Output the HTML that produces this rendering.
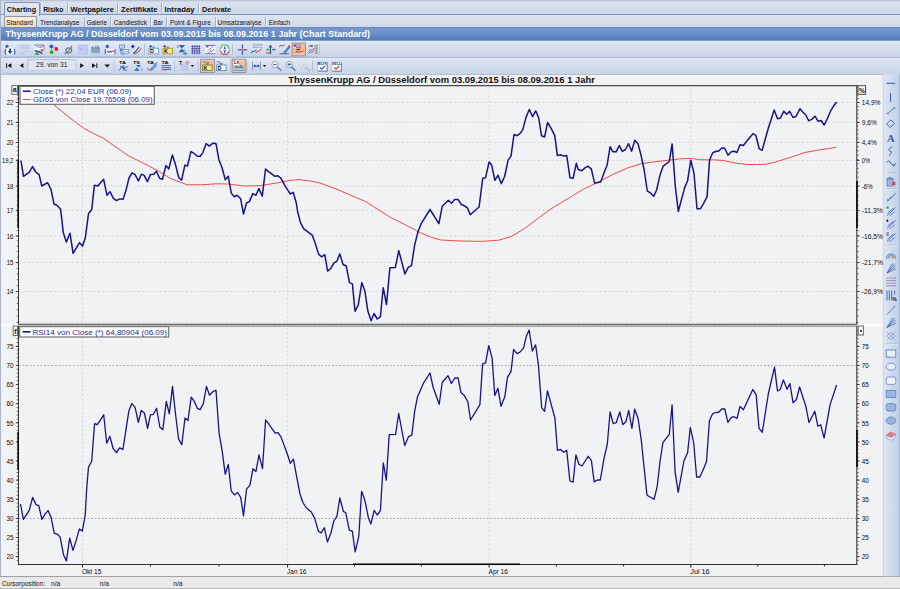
<!DOCTYPE html><html><head><meta charset="utf-8"><title>Chart</title><style>
*{margin:0;padding:0;box-sizing:border-box}
html,body{width:900px;height:589px;overflow:hidden}
body{position:relative;background:#d3dff0;font-family:"Liberation Sans",sans-serif;font-size:10px;color:#000}
.abs{position:absolute}
#row1{left:0;top:0;width:900px;height:15px;background:linear-gradient(#adb8c8 0,#ccd4e2 8%,#dbe2ef 20%,#d6deec 45%,#cad6e8 100%);border-bottom:1.2px solid #7f93b8}
#row2{left:0;top:15px;width:900px;height:13px;background:linear-gradient(#dee5f1 0,#d6deec 50%,#cdd8e9 93%,#a9b4c8 100%)}
.t1{position:absolute;top:4px;height:11px;font-weight:bold;font-size:9.5px;line-height:10px;color:#151515;white-space:nowrap;letter-spacing:-0.25px}
.t2{position:absolute;top:18px;height:10px;font-size:9px;line-height:10px;color:#151515;white-space:nowrap;letter-spacing:-0.3px}
.sep1{position:absolute;top:3px;width:1px;height:10px;background:#9fb1cd;border-right:1px solid #eef3fa;box-sizing:content-box}
.sep2{position:absolute;top:17px;width:1px;height:10px;background:#9fb1cd;border-right:1px solid #eef3fa;box-sizing:content-box}
#tabA{left:4px;top:2.3px;width:36px;height:13.7px;border:1px solid #7f93b8;border-bottom:none;border-radius:2px 2px 0 0;background:linear-gradient(#e1e8f3,#d8e0ee)}
#tabB{left:4px;top:16px;width:33.4px;height:12px;border:1px solid #8793a8;border-bottom:none;border-radius:2px 2px 0 0;background:linear-gradient(#fff3d9,#fdd3a6)}
#title{left:0;top:27.2px;width:900px;height:14.1px;background:linear-gradient(#6688c0 0%,#7397cd 12%,#6c91c9 40%,#5a83c0 75%,#527cbb 93%,#a3b9dc 100%);color:#fff;font-weight:bold;font-size:10.5px;line-height:13px;padding-left:3px;white-space:nowrap;letter-spacing:0.05px}
#tb1{left:0;top:41px;width:900px;height:16.6px;background:linear-gradient(#e6ecf6 0,#dbe3f0 12%,#d3dcec 60%,#c9d5e8 92%,#97a8c6 100%)}
#tb2{left:0;top:57.6px;width:900px;height:17.1px;background:linear-gradient(#e3e9f4 0,#dbe3f0 12%,#d2dcec 60%,#c8d4e7 92%,#a3b1c8 100%)}
#chart{left:1px;top:74.7px;width:883px;height:502.3px;background:#f1f2f4}
#leftedge{left:0;top:0;width:1.3px;height:589px;background:#aab5c7}
#rtb{left:884px;top:74px;width:16px;height:503px;background:linear-gradient(90deg,#dfe8f5,#c5d4ea)}
#status{left:0;top:576px;width:900px;height:13px;background:#ece9ea;border-top:1px solid #a0a0a0;border-bottom:1px solid #b9b9b9;font-size:8.5px;line-height:11px;color:#111;letter-spacing:-0.2px}
#status span{position:absolute;top:0}
svg text{font-family:"Liberation Sans",sans-serif}
</style></head><body>
<div id="row1" class="abs"></div><div id="row2" class="abs"></div>
<div id="tabA" class="abs"></div><div id="tabB" class="abs"></div>
<div class="sep1" style="left:40px"></div>
<div class="sep1" style="left:67px"></div>
<div class="sep1" style="left:117px"></div>
<div class="sep1" style="left:160.5px"></div>
<div class="sep1" style="left:198px"></div>
<div class="sep2" style="left:83.5px"></div>
<div class="sep2" style="left:110px"></div>
<div class="sep2" style="left:150px"></div>
<div class="sep2" style="left:166px"></div>
<div class="sep2" style="left:214.5px"></div>
<div class="sep2" style="left:265px"></div>
<div id="title" class="abs"></div>
<div id="tb1" class="abs"></div><div id="tb2" class="abs"></div>
<div id="chart" class="abs"></div><div id="rtb" class="abs"></div><div id="leftedge" class="abs"></div>
<div id="status" class="abs"></div>
<svg class="abs" style="left:0;top:0" width="900" height="589" viewBox="0 0 900 589">
<defs><linearGradient id="tbg" x1="0" y1="0" x2="0" y2="1"><stop offset="0" stop-color="#e4eaf5"/><stop offset="0.5" stop-color="#d5deed"/><stop offset="1" stop-color="#c6d2e6"/></linearGradient><linearGradient id="selg" x1="0" y1="0" x2="0" y2="1"><stop offset="0" stop-color="#f7c9a0"/><stop offset="0.5" stop-color="#f5b583"/><stop offset="1" stop-color="#f7c79b"/></linearGradient><linearGradient id="rtg" x1="0" y1="0" x2="1" y2="0"><stop offset="0" stop-color="#dfe7f3"/><stop offset="1" stop-color="#bfcfe7"/></linearGradient></defs>
<rect x="2" y="41.8" width="143" height="15.200000000000003" rx="2.5" fill="url(#tbg)" stroke="none"/><path d="M144.5,43.8 V55.0" stroke="#b3c3dc" stroke-width="1" fill="none"/><path d="M4,56.6 H143" stroke="#b1c1da" stroke-width="1" fill="none"/>
<rect x="146.5" y="41.8" width="86.5" height="15.200000000000003" rx="2.5" fill="url(#tbg)" stroke="none"/><path d="M232.5,43.8 V55.0" stroke="#b3c3dc" stroke-width="1" fill="none"/><path d="M148.5,56.6 H231" stroke="#b1c1da" stroke-width="1" fill="none"/>
<rect x="234.3" y="41.8" width="85.69999999999999" height="15.200000000000003" rx="2.5" fill="url(#tbg)" stroke="none"/><path d="M319.5,43.8 V55.0" stroke="#b3c3dc" stroke-width="1" fill="none"/><path d="M236.3,56.6 H318" stroke="#b1c1da" stroke-width="1" fill="none"/>
<rect x="2" y="58.4" width="112.7" height="15.899999999999999" rx="2.5" fill="url(#tbg)" stroke="none"/><path d="M114.2,60.4 V72.3" stroke="#b3c3dc" stroke-width="1" fill="none"/><path d="M4,73.89999999999999 H112.7" stroke="#b1c1da" stroke-width="1" fill="none"/>
<rect x="115.8" y="58.4" width="59.2" height="15.899999999999999" rx="2.5" fill="url(#tbg)" stroke="none"/><path d="M174.5,60.4 V72.3" stroke="#b3c3dc" stroke-width="1" fill="none"/><path d="M117.8,73.89999999999999 H173" stroke="#b1c1da" stroke-width="1" fill="none"/>
<rect x="175.8" y="58.4" width="71.5" height="15.899999999999999" rx="2.5" fill="url(#tbg)" stroke="none"/><path d="M246.8,60.4 V72.3" stroke="#b3c3dc" stroke-width="1" fill="none"/><path d="M177.8,73.89999999999999 H245.3" stroke="#b1c1da" stroke-width="1" fill="none"/>
<rect x="248.6" y="58.4" width="64.4" height="15.899999999999999" rx="2.5" fill="url(#tbg)" stroke="none"/><path d="M312.5,60.4 V72.3" stroke="#b3c3dc" stroke-width="1" fill="none"/><path d="M250.6,73.89999999999999 H311" stroke="#b1c1da" stroke-width="1" fill="none"/>
<path d="M7,44.3 l2,2.2 l-2,2.2 l-2,-2.2z" fill="#2f5fc4"/>
<rect x="6" y="47.6" width="7.6" height="7" rx="2" fill="#f6f8fd"/>
<path d="M5.6,49 q-1,2.8 0,5.6 M14.4,49 q1,2.8 0,5.6" stroke="#2f5fc4" stroke-width="1.1" fill="none"/>
<path d="M9.2,48.5 h1.8 v2.6 h1.5 l-2.4,2.8 l-2.4,-2.8 h1.5z" fill="#1c3f9c"/>
<rect x="19.6" y="44.6" width="10" height="4.4" fill="#bccdf0"/><path d="M21,54 l7,-4" stroke="#a9bde8" stroke-width="1.1" stroke-dasharray="1.4,0.7"/>
<rect x="34" y="44.6" width="10" height="5.6" fill="#f2f5fc"/><path d="M34,45 h10" stroke="#5b78c8" stroke-width="0.9"/><path d="M44,45 v5" stroke="#5b78c8" stroke-width="0.7"/>
<path d="M35.5,47.2 l2,-1 l1.5,1.2 l1.6,-0.6" stroke="#2f5fc4" stroke-width="0.7" fill="none"/><path d="M40,48 l1.5,-1.8 l1.2,0.8 l1,-1.4" stroke="#e03030" stroke-width="0.8" fill="none"/>
<path d="M35,50.2 l2.4,1.6 l1.4,-0.4 l3.6,2.4" stroke="#1c3f9c" stroke-width="1.3" fill="none"/>
<path d="M34.6,54.8 l2.4,-3 l2.4,3z" fill="#2aa02a"/><path d="M40,49.5 h4 l-2,2.6z" fill="#e03030"/>
<path d="M51.5,46.5 V52 M51.5,47 H55.5 V49" stroke="#8a94a8" stroke-width="0.8" fill="none"/>
<path d="M51.3,44.3 l2.1,2.2 l-2.1,2.2 l-2.1,-2.2z" fill="#1a3fe0"/><circle cx="56.3" cy="49" r="1.9" fill="#e81c1c"/><circle cx="51.6" cy="52.2" r="1.9" fill="#22b022"/>
<ellipse cx="68.8" cy="50.3" rx="2.9" ry="2.5" fill="none" stroke="#66808c" stroke-width="1.2"/><path d="M64.5,53.6 q4,-1 7.6,-7.8" stroke="#66808c" stroke-width="1.1" fill="none"/><path d="M66.4,53.6 h1.6" stroke="#c060d0" stroke-width="0.9"/>
<rect x="78" y="44.7" width="9.9" height="9.8" fill="#b9c8f0"/><path d="M80,47 l1.5,1.2 l1.5,-1.6 l1.5,1.4 l1.5,-1.4 M80,51.5 l1.5,1.2 l1.5,-1.6 l1.5,1.4 l1.5,-1.4" stroke="#d6e0f8" stroke-width="0.7" fill="none"/><path d="M80,49.3 h2" stroke="#8fa3d8" stroke-width="0.7"/>
<linearGradient id="barg" x1="0" y1="0" x2="0" y2="1"><stop offset="0" stop-color="#6d94c8"/><stop offset="1" stop-color="#93a8be"/></linearGradient>
<path d="M91.2,53 V47 h1.2 v-0.8 h1.4 v1.4 h1.2 v-1.8 h1.4 v1.2 h1 v-1.4 h1.4 v1.6 h1.2 V53z" fill="url(#barg)"/><path d="M91,54.2 h10" stroke="#8fd0e6" stroke-width="0.9"/>
<path d="M107.3,44.3 l2,2.2 l-2,2.2 l-2,-2.2z" fill="#2f5fc4"/>
<rect x="105.6" y="48.8" width="9" height="5.4" fill="#f6f8fd"/>
<path d="M105.3,49 v5.2 M115,49 v5.2" stroke="#2f5fc4" stroke-width="1" fill="none"/>
<path d="M106.6,52.8 l1.2,-2 l1.2,2 l1.2,-2 l1.2,2" stroke="#1c3f9c" stroke-width="0.8" fill="none"/><path d="M111,52.6 l1.2,-2 l1,1.6 l1,-2" stroke="#e03030" stroke-width="0.8" fill="none"/>
<rect x="119.4" y="45" width="5.2" height="3" fill="#f4f7fd" stroke="#5f86c8" stroke-width="0.8"/><path d="M120.5,46.6 h3" stroke="#8a98b0" stroke-width="0.6"/>
<rect x="122.8" y="49.7" width="6" height="3.4" fill="#f4f7fd" stroke="#5f86c8" stroke-width="0.8"/><path d="M124,51.5 h3.6" stroke="#8a98b0" stroke-width="0.6"/>
<path d="M121,48 v6 h4" stroke="#5f86c8" stroke-width="0.8" fill="none"/><path d="M119.3,50 l1.6,-1.3 v2.6z" fill="#2f5fc4"/><path d="M120.5,50 h2.4" stroke="#2f5fc4" stroke-width="0.8"/>
<path d="M132.8,44.4 l2,2.1 l-2,2.1 l-2,-2.1z" fill="#1a3fe0"/>
<path d="M132.4,53.6 L139,46.6" stroke="#f4f6fb" stroke-width="2.4"/><path d="M133,53.4 q3.5,-2 6.2,-6.6" stroke="#1c3f9c" stroke-width="1.1" fill="none"/><path d="M133.5,53.8 q5,-0.4 7.2,-5.4" stroke="#e03030" stroke-width="1" fill="none"/>
<path d="M152.4,48.3 v-1.6 h2.4 v1.6" fill="#6aa0cc" stroke="#6aa0cc" stroke-width="0.5"/><rect x="149" y="48.3" width="9.5" height="5.6" fill="#f6f8fc" stroke="#6aa0cc" stroke-width="0.9"/><text x="151.9" y="53.3" font-size="5.4" font-weight="bold" text-anchor="middle" fill="#111">D</text><path d="M149,46.3 h3" stroke="#1c3f9c" stroke-width="0.9"/><path d="M150.6,45.099999999999994 v2.4" stroke="#1c3f9c" stroke-width="0.9"/>
<path d="M166.4,48.3 v-1.6 h2.4 v1.6" fill="#a89c3c" stroke="#a89c3c" stroke-width="0.5"/><rect x="163" y="48.3" width="9.5" height="5.6" fill="#efe58c" stroke="#a89c3c" stroke-width="0.9"/><text x="165.9" y="53.3" font-size="5.4" font-weight="bold" text-anchor="middle" fill="#111">K</text><path d="M163,46.3 h3" stroke="#1c3f9c" stroke-width="0.9"/><path d="M164.6,45.099999999999994 v2.4" stroke="#1c3f9c" stroke-width="0.9"/>
<path d="M178.5,45 h6.6 l-3.3,3.6 l3.3,3.6 h-6.6 l3.3,-3.6z" fill="#2a62c8"/><path d="M183,53 h2.2 v-1.2 l2,1.8 l-2,1.8 v-1.2 h-2.2z" fill="#3a78d8"/><path d="M177.9,45.3 v2.8" stroke="#e03030" stroke-width="0.9"/><path d="M184.5,49.2 v2.2" stroke="#58c058" stroke-width="1"/>
<rect x="191.3" y="45.3" width="9" height="8.7" fill="#f0f3fb"/>
<path d="M192.4,45.2 v9 M191.2,46.4 h9.2" stroke="#3a3aa0" stroke-width="0.8"/>
<path d="M194.7,45.2 v9 M191.2,48.6 h9.2" stroke="#3a3aa0" stroke-width="0.8"/>
<path d="M197.0,45.2 v9 M191.2,50.8 h9.2" stroke="#3a3aa0" stroke-width="0.8"/>
<path d="M199.3,45.2 v9 M191.2,53.0 h9.2" stroke="#3a3aa0" stroke-width="0.8"/>
<rect x="205.3" y="45" width="10" height="9" fill="#f4f6fc"/><path d="M205.3,45.5 h10" stroke="#6a6ad8" stroke-width="1.1"/><path d="M205.3,53.6 h10" stroke="#7a7ae0" stroke-width="1"/>
<path d="M206,46.8 h2.4" stroke="#223" stroke-width="0.9"/><path d="M207.5,51 l5.5,-4.2" stroke="#2f5fc4" stroke-width="1" stroke-dasharray="1,0.6"/><path d="M208.5,52.6 l2,-1.6 l1,0.6 l2.6,-2.4" stroke="#e03030" stroke-width="0.9" fill="none"/>
<path d="M220,49.6 l2.5,-4.6 h4.6 l2.5,4.6 l-2.5,4.6 h-4.6z" fill="#f6f7fb"/>
<path d="M220.4,48.6 l2.1,-3.6 h4.6 l2.1,3.6" stroke="#58b048" stroke-width="1.2" fill="none"/><path d="M220.4,50.8 l2.1,3.6 h4.6 l2.1,-3.6" stroke="#e04848" stroke-width="1.2" fill="none"/><path d="M220,48.4 v2.6 M229.6,48.4 v2.6" stroke="#a0a0b8" stroke-width="0.8"/>
<path d="M224.8,46.4 v2.6 M224.8,50.6 v2.6" stroke="#2f5fc4" stroke-width="1.3"/><path d="M223.4,50.9 h2.8 M223.6,48.8 h2.4" stroke="#2f5fc4" stroke-width="0.7"/>
<path d="M242.4,44.5 v10.2" stroke="#2a3fd0" stroke-width="1.1"/><path d="M237.7,49.8 h9.4" stroke="#2a3fd0" stroke-width="1.1"/><path d="M241,49.8 h2.8 M242.4,48.4 v2.8" stroke="#e08a30" stroke-width="1.1"/>
<rect x="253.2" y="44.2" width="8.6" height="3.2" fill="#eef2fa" stroke="#8a96ac" stroke-width="0.6"/><path d="M254.2,46.3 l2,-0.6 l2,0.4 l2.4,-1" stroke="#2f5fc4" stroke-width="0.6" fill="none"/>
<path d="M251,53.4 l2,-2.6 l1.2,1.2 l2,-2.2" stroke="#1c3f9c" stroke-width="0.9" fill="none"/><path d="M256,53 l1.6,-2.2 l1,1 l2.8,-3" stroke="#e03030" stroke-width="0.9" fill="none"/>
<path d="M270.5,54.2 v-7" stroke="#1f5a80" stroke-width="1.2"/><path d="M268.5,47.6 l2,-3 l2,3z" fill="#1f5a80"/>
<path d="M266.2,49.6 h3.4 M267.6,48.4 v2.4" stroke="#30c030" stroke-width="1"/><path d="M266.2,53 h3.4" stroke="#f03030" stroke-width="1.1"/><path d="M273,49.6 h2.8" stroke="#2f5fc4" stroke-width="1"/><path d="M272,49.6 l1.6,-1.3 v2.6z" fill="#2f5fc4"/>
<path d="M279.2,46.6 l2,-1.4 l1.4,1 l2,-1.6" stroke="#223" stroke-width="0.7" fill="none"/><path d="M283.6,52.2 l5,-5.8 l1.4,1.2 l-5,5.8z" fill="#4c84e0" stroke="#2b4fa0" stroke-width="0.4"/><path d="M288.4,45.6 l1.6,1.4" stroke="#e03030" stroke-width="1.5"/><path d="M282.6,53.8 l1,-1.6 l1.4,1.2z" fill="#e8c66a"/><path d="M279.5,53.8 h9.6" stroke="#1f5a70" stroke-width="0.9"/>
<rect x="292.1" y="43" width="13.299999999999955" height="12.899999999999999" fill="url(#selg)" stroke="#8a8f9c" stroke-width="0.9"/>
<rect x="293.6" y="44.4" width="7.6" height="3.8" fill="#f5f7ff"/><path d="M295.6,44.9 h5.6 M295.6,47.7 h5.6" stroke="#e03030" stroke-width="0.9"/><path d="M293.6,46.3 h7.6" stroke="#5a78d8" stroke-width="0.8"/><rect x="293.6" y="44.4" width="2.2" height="2" fill="#2f5fc4"/>
<path d="M296.4,49.6 h3.6 M298.2,48.8 v1.2" stroke="#223" stroke-width="0.9"/><path d="M295.4,52.6 l1.6,-1.4 l1.2,1.4 l1.4,-1.4" stroke="#1c3f9c" stroke-width="0.9" fill="none"/><path d="M299.4,52.6 l1.4,-1.4 l1,1 l1.4,-1.6" stroke="#e03030" stroke-width="0.9" fill="none"/>
<rect x="314.6" y="44.2" width="3.2" height="10" fill="#b2bac8"/><path d="M314.6,46 h3.2 M314.6,48.4 h3.2 M314.6,50.8 h3.2 M314.6,53 h3.2" stroke="#6a7890" stroke-width="0.5"/>
<path d="M308.6,46 h4.4" stroke="#1f5a80" stroke-width="0.9"/><path d="M311.2,44.8 l1.8,1.2 l-1.8,1.2z" fill="#1f5a80"/><path d="M308.4,51.2 l2,-1.8 l1.2,1 l2.6,-2.4" stroke="#e03030" stroke-width="0.9" fill="none"/><path d="M308.4,53.4 l2,-1.8 l1.2,1 l2.6,-2.4" stroke="#2f5fc4" stroke-width="0.9" fill="none"/>
<path d="M6.6,63.3 v4.6" stroke="#111" stroke-width="1"/><path d="M11.4,63.199999999999996 v4.8 l-3.8,-2.4z" fill="#111"/>
<path d="M23.4,63.199999999999996 v4.8 l-3.8,-2.4z" fill="#111"/>
<rect x="27.8" y="59.6" width="48" height="10.6" fill="#dde5f2" stroke="#c0cbdd" stroke-width="0.8"/><path d="M27.8,70.2 v-10.6 h48" stroke="#b4c0d4" stroke-width="0.8" fill="none"/>
<text x="36" y="66.8" font-size="7.6" fill="#222" textLength="31.5" lengthAdjust="spacingAndGlyphs">29. von 31</text>
<path d="M80.2,63.199999999999996 v4.8 l3.8,-2.4z" fill="#111"/>
<path d="M92,63.199999999999996 v4.8 l3.8,-2.4z" fill="#111"/><path d="M96.8,63.3 v4.6" stroke="#111" stroke-width="1"/>
<path d="M104.4,64.39999999999999 h5.6 l-2.8,3z" fill="#111"/>
<text x="119" y="64.3" font-size="4.4" font-weight="bold" fill="#111" textLength="7" lengthAdjust="spacingAndGlyphs">TA</text>
<text x="133" y="64.3" font-size="4.4" font-weight="bold" fill="#111" textLength="7" lengthAdjust="spacingAndGlyphs">TS</text>
<text x="147" y="64.3" font-size="4.4" font-weight="bold" fill="#111" textLength="7" lengthAdjust="spacingAndGlyphs">TA</text>
<text x="161.5" y="64.3" font-size="4.4" font-weight="bold" fill="#111" textLength="7" lengthAdjust="spacingAndGlyphs">TA</text>
<path d="M119.4,70.6 l2.6,-4.6 l2.4,2.4 l3.6,-2 M120,66 l3.6,2.6 l3.6,2.2 M123.8,65.2 v5.6" stroke="#3a62c8" stroke-width="0.9" fill="none"/><circle cx="123.8" cy="68" r="1.1" fill="#2f5fc4"/>
<path d="M136,65 h5 l-2.5,2.6z M134,70.8 l2.8,-3.4 l2.8,3.4z" fill="#2a6ad0"/><path d="M141.8,68 v3" stroke="#58c058" stroke-width="1.1"/>
<path d="M147.2,68 l2.4,2.6 l2,-2.2" stroke="#e03030" stroke-width="0.9" fill="none"/><path d="M150,70.4 q4,-2 7,-8.4 M151.4,70.6 q3.4,-1.6 5.6,-6 M150.4,69 q3,-2 5.4,-6" stroke="#3a62c8" stroke-width="0.8" fill="none"/>
<path d="M161.5,65.6 h9.6 M161.5,67.6 h9.6 M161.5,69.6 h9.6" stroke="#3a62c8" stroke-width="0.9"/><path d="M164,69.6 h2.2" stroke="#f04020" stroke-width="1.5"/><path d="M167.2,67.6 h2" stroke="#30a040" stroke-width="1.4"/>
<text x="179" y="64.6" font-size="5" font-weight="bold" fill="#111">T</text>
<path d="M182.2,62 v8.4" stroke="#8fb0e8" stroke-width="0.6" stroke-dasharray="0.8,0.6"/><path d="M180.4,64.4 h7.8" stroke="#8fb0e8" stroke-width="0.6" stroke-dasharray="0.8,0.6"/>
<path d="M184.1,62 v8.4" stroke="#8fb0e8" stroke-width="0.6" stroke-dasharray="0.8,0.6"/><path d="M180.4,66.3 h7.8" stroke="#8fb0e8" stroke-width="0.6" stroke-dasharray="0.8,0.6"/>
<path d="M186.0,62 v8.4" stroke="#8fb0e8" stroke-width="0.6" stroke-dasharray="0.8,0.6"/><path d="M180.4,68.2 h7.8" stroke="#8fb0e8" stroke-width="0.6" stroke-dasharray="0.8,0.6"/>
<path d="M187.9,62 v8.4" stroke="#8fb0e8" stroke-width="0.6" stroke-dasharray="0.8,0.6"/><path d="M180.4,70.1 h7.8" stroke="#8fb0e8" stroke-width="0.6" stroke-dasharray="0.8,0.6"/>
<circle cx="187.7" cy="62.6" r="1.4" fill="#fff" stroke="#e05060" stroke-width="0.7"/><circle cx="187.7" cy="62.6" r="0.5" fill="#2f5fc4"/>
<path d="M190.6,65.0 h3.6 l-1.8,2z" fill="#111"/>
<path d="M198,59.599999999999994 v12.5" stroke="#aebcd4" stroke-width="0.8"/>
<rect x="200.6" y="59.2" width="14.0" height="13.399999999999991" fill="url(#selg)" stroke="#8a8f9c" stroke-width="0.9"/>
<path d="M202.6,62.4 l1.4,-0.8 l1.4,1 l1.4,-1 l1.4,1 l1,-0.8" stroke="#2f5fc4" stroke-width="0.7" fill="none"/>
<path d="M206.0,65 v-1.6 h2.4 v1.6" fill="#8a8440" stroke="#8a8440" stroke-width="0.5"/><rect x="202.6" y="65" width="9.5" height="5.6" fill="#efe58c" stroke="#8a8440" stroke-width="0.9"/><text x="205.5" y="70" font-size="5.4" font-weight="bold" text-anchor="middle" fill="#111">K</text>
<path d="M216.6,61.6 h2.6 v1.8 h3.4" stroke="#4a78c0" stroke-width="0.8" fill="none"/>
<path d="M220.0,65 v-1.6 h2.4 v1.6" fill="#5a90c8" stroke="#5a90c8" stroke-width="0.5"/><rect x="216.6" y="65" width="9.5" height="5.6" fill="#f6f8fc" stroke="#5a90c8" stroke-width="0.9"/><text x="219.5" y="70" font-size="5.4" font-weight="bold" text-anchor="middle" fill="#111">D</text>
<path d="M230.5,59.599999999999994 v12.5" stroke="#aebcd4" stroke-width="0.8"/>
<rect x="232.1" y="59.2" width="13.700000000000017" height="13.399999999999991" fill="url(#selg)" stroke="#8a8f9c" stroke-width="0.9"/>
<rect x="233.6" y="60.4" width="5.6" height="4.6" fill="#fff"/><text x="233.9" y="64.3" font-size="4.6" font-weight="bold" fill="#111" textLength="5" lengthAdjust="spacingAndGlyphs">Ln</text>
<path d="M233.6,68.6 l3,-3.4 l2,2 l2.2,-2.4 l3.6,3.8z" fill="#2f90e0"/><path d="M233.6,70.2 h10.8" stroke="#2f90e0" stroke-width="1.1"/><path d="M233.6,69 h10.8" stroke="#f4f8ff" stroke-width="0.6"/>
<path d="M252.5,61.8 v8.4 M260.5,61.8 v8.4" stroke="#8a94a8" stroke-width="0.9"/><path d="M254.4,66 h4.2" stroke="#1a3fd0" stroke-width="1"/><path d="M253.2,66 l2,-1.7 v3.4z M259.8,66 l-2,-1.7 v3.4z" fill="#1a3fd0"/>
<path d="M262.8,65.0 h3.6 l-1.8,2z" fill="#111"/>
<circle cx="275" cy="64.5" r="3.2" fill="#f0f4fb" stroke="#7088b8" stroke-width="0.9" stroke-opacity="0.75"/><path d="M277.5,67.10000000000001 L280.8,70.3" stroke="#7088b8" stroke-width="1.5" stroke-linecap="round"/><path d="M273.4,64.5 h3.2" stroke="#2f5fc4" stroke-width="1.1"/>
<circle cx="289.2" cy="64.5" r="3.2" fill="#f0f4fb" stroke="#5d79b0" stroke-width="0.9" stroke-opacity="0.75"/><path d="M291.7,67.10000000000001 L295.0,70.3" stroke="#5d79b0" stroke-width="1.5" stroke-linecap="round"/><path d="M287.6,64.5 h3.2 M289.2,62.9 v3.2" stroke="#2f5fc4" stroke-width="1.1"/>
<circle cx="303.5" cy="64.8" r="3.2" fill="#f0f4fb" stroke="#b8c0cc" stroke-width="0.9" stroke-opacity="0.75"/><path d="M306.0,67.4 L309.3,70.6" stroke="#b8c0cc" stroke-width="1.5" stroke-linecap="round"/><rect x="302.2" y="63.4" width="2.6" height="3" fill="#c4cad4"/>
<rect x="317.7" y="62.2" width="9.3" height="8.8" fill="#fff" stroke="#a8b4c8" stroke-width="0.6"/><path d="M317.90000000000003,71.2 h9.3 v-8.6" stroke="#6a7690" stroke-width="0.9" fill="none"/>
<text x="317.5" y="64.6" font-size="4.2" font-weight="bold" fill="#2040b0" textLength="9.4" lengthAdjust="spacingAndGlyphs">BUY</text>
<path d="M319.90000000000003,67.4 l1.8,1.8 l3.2,-3.2" stroke="#2f5fc4" stroke-width="1.3" fill="none"/>
<rect x="332.0" y="62.2" width="9.3" height="8.8" fill="#fff" stroke="#a8b4c8" stroke-width="0.6"/><path d="M332.20000000000005,71.2 h9.3 v-8.6" stroke="#6a7690" stroke-width="0.9" fill="none"/>
<text x="331.8" y="64.6" font-size="4.2" font-weight="bold" fill="#2040b0" textLength="9.4" lengthAdjust="spacingAndGlyphs">SELL</text>
<path d="M334.20000000000005,67.4 l1.8,1.8 l3.2,-3.2" stroke="#e04020" stroke-width="1.3" fill="none"/>
<rect x="883" y="74.7" width="17" height="501.5" fill="url(#rtg)"/><rect x="899" y="74.7" width="1" height="501.5" fill="#a9b9d3"/>
<path d="M883.3,74.7 V576.2" stroke="#c9d5e9" stroke-width="1"/>
<path d="M886,188.5 H898" stroke="#a9bad6" stroke-width="0.9"/><path d="M886,189.4 H898" stroke="#e8eef8" stroke-width="0.8"/>
<path d="M886,245 H898" stroke="#a9bad6" stroke-width="0.9"/><path d="M886,245.9 H898" stroke="#e8eef8" stroke-width="0.8"/>
<path d="M886,343.8 H898" stroke="#a9bad6" stroke-width="0.9"/><path d="M886,344.7 H898" stroke="#e8eef8" stroke-width="0.8"/>
<path d="M886.4,83.3 H895.2" stroke="#3559c0" stroke-width="1"/>
<path d="M890.5,93 V101.8" stroke="#3559c0" stroke-width="1"/>
<path d="M887.6,113.6 L894.4,107.8 M886.9,112.6 l1.4,1.8 M893.8,107 l1.4,1.8" stroke="#3559c0" stroke-width="0.9"/>
<path d="M886.5,123.7 l4.5,-3.8 l3.6,3.8 l-4.5,3.8z" stroke="#3559c0" stroke-width="0.9" fill="none"/>
<text x="890.8" y="141.7" font-size="10.5" font-weight="bold" font-family="Liberation Serif,serif" style="font-family:'Liberation Serif',serif" text-anchor="middle" fill="#2a50c0">A</text>
<path d="M892.2,146.4 q-3.4,2.2 -3.4,3.4 q0,1 3,2.2 q-1.6,2 -2.4,3.6" stroke="#3559c0" stroke-width="0.9" fill="none"/>
<path d="M886.6,162.5 q2.2,-3.4 4.2,0.6 q2,4 4.4,0.4 M893.5,166.6 l1.8,-3" stroke="#3559c0" stroke-width="1" fill="none"/>
<path d="M887.5,172.3 H896" stroke="#b4bece" stroke-width="1"/>
<rect x="887.2" y="179" width="5.8" height="7" fill="#b4c8e8" stroke="#5a7ab8" stroke-width="0.9"/><path d="M889.2,180 v5 M891,180 v5" stroke="#6f8fc8" stroke-width="0.6"/><path d="M886.6,178.6 h7 M888.8,177.4 h2.6" stroke="#5a7ab8" stroke-width="0.9"/><path d="M892.3,182 l3,3 m0,-3 l-3,3" stroke="#e03030" stroke-width="1.1"/>
<path d="M886.8,201.5 L895.5,193.5 M887.5,199 l1.5,1.8 M890,196.8 l1.5,1.8" stroke="#3559c0" stroke-width="0.9"/>
<path d="M887,215.5 L895.5,207.5" stroke="#3559c0" stroke-width="0.9"/><path d="M887.5,213.0 l5.5,-4.5 M889.5,216.0 l5.5,-4.5" stroke="#3559c0" stroke-width="0.7"/><rect x="886.6" y="206.5" width="2" height="2.2" fill="#2aa02a"/>
<path d="M887,228.5 L895.5,220.5" stroke="#3559c0" stroke-width="0.9"/><path d="M887.5,226.0 l5.5,-4.5 M889.5,229.0 l5.5,-4.5" stroke="#3559c0" stroke-width="0.7"/><rect x="886.6" y="219.5" width="1.6" height="2.4" fill="#222"/>
<path d="M887,241.5 L895.5,233.5" stroke="#3559c0" stroke-width="0.9"/><path d="M887.5,239.0 l5.5,-4.5 M889.5,242.0 l5.5,-4.5" stroke="#3559c0" stroke-width="0.7"/><path d="M886.4,233 h2.4 M886.4,235 h2.4" stroke="#222" stroke-width="0.8"/>
<path d="M886.5,258.5 a4.6,4.6 0 0 1 9.2,0 M888.2,258.5 a2.9,2.9 0 0 1 5.8,0" stroke="#3559c0" stroke-width="0.8" fill="none"/><path d="M887,258 h8.4" stroke="#d8b040" stroke-width="0.9"/>
<path d="M887,273 L895,263.5 M887,273 L895.6,266 M887,273 L895.8,268.8 M887,273 L892.5,263.5" stroke="#3559c0" stroke-width="0.7"/>
<path d="M886.5,278.0 h9.4" stroke="#e03030" stroke-width="0.9" stroke-dasharray="1.2,0.8"/>
<path d="M886.5,280.6 h9.4" stroke="#3559c0" stroke-width="0.9" stroke-dasharray="1.2,0.8"/>
<path d="M886.5,283.2 h9.4" stroke="#e03030" stroke-width="0.9" stroke-dasharray="1.2,0.8"/>
<path d="M886.5,285.8 h9.4" stroke="#3559c0" stroke-width="0.9" stroke-dasharray="1.2,0.8"/>
<path d="M887,290.5 v10 M889.3,290.5 v10 M891.6,290.5 v10 M894.6,290.5 v4" stroke="#3559c0" stroke-width="0.9"/><text x="892.3" y="301" font-size="5" font-weight="bold" fill="#111">%</text>
<path d="M887,314.5 L895.4,306" stroke="#3559c0" stroke-width="0.8"/>
<path d="M887,327.5 L895,318 M887,327.5 L895.6,320.5 M887,327.5 L895.8,323.3 M887,327.5 L892.5,318" stroke="#3559c0" stroke-width="0.7"/>
<path d="M887,332 l8,8 m0,-8 l-8,8 M891,332 l4,4 l-4,4 l-4,-4z" stroke="#6080d0" stroke-width="0.5" fill="none"/>
<rect x="886.2" y="350" width="9.6" height="7.2" fill="#e9eef8" stroke="#5f80c4" stroke-width="0.9"/>
<ellipse cx="891" cy="366.7" rx="4.8" ry="3.5" fill="#e9eef8" stroke="#6f8cc8" stroke-width="0.9"/>
<rect x="886.2" y="377" width="9.6" height="7.4" rx="2" fill="#eef2fa" stroke="#6f8cc8" stroke-width="0.9"/>
<rect x="886.2" y="390.4" width="9.6" height="7.2" fill="#9db3e0" stroke="#6685c8" stroke-width="0.9"/>
<rect x="886.2" y="403.6" width="9.6" height="7.4" rx="2.2" fill="#9db3e0" stroke="#6685c8" stroke-width="0.9"/>
<ellipse cx="891" cy="420.6" rx="4.8" ry="3.6" fill="#9db3e0" stroke="#6685c8" stroke-width="0.9"/>
<path d="M886.3,435.5 l4,-3.5 l5.2,2 l-4,3.6z" fill="#e87a80" stroke="#c04850" stroke-width="0.5"/><path d="M886.3,435.5 v2.6 l5.2,2.2 l4,-3.6 v-2.7 l-4,3.6z" fill="#eef2fb" stroke="#6f8cc8" stroke-width="0.6"/>
<text x="6.8" y="11.5" font-size="8.1" font-weight="bold" fill="#111" text-anchor="start" textLength="29.2" lengthAdjust="spacingAndGlyphs">Charting</text>
<text x="43.2" y="11.5" font-size="8.1" font-weight="bold" fill="#111" text-anchor="start" textLength="20.3" lengthAdjust="spacingAndGlyphs">Risiko</text>
<text x="70.6" y="11.5" font-size="8.1" font-weight="bold" fill="#111" text-anchor="start" textLength="43.4" lengthAdjust="spacingAndGlyphs">Wertpapiere</text>
<text x="121.0" y="11.5" font-size="8.1" font-weight="bold" fill="#111" text-anchor="start" textLength="36.5" lengthAdjust="spacingAndGlyphs">Zertifikate</text>
<text x="164.5" y="11.5" font-size="8.1" font-weight="bold" fill="#111" text-anchor="start" textLength="30.0" lengthAdjust="spacingAndGlyphs">Intraday</text>
<text x="202.0" y="11.5" font-size="8.1" font-weight="bold" fill="#111" text-anchor="start" textLength="29.0" lengthAdjust="spacingAndGlyphs">Derivate</text>
<text x="6.3" y="25.4" font-size="7.8" font-weight="normal" fill="#111" text-anchor="start" textLength="26.7" lengthAdjust="spacingAndGlyphs">Standard</text>
<text x="40.0" y="25.4" font-size="7.8" font-weight="normal" fill="#111" text-anchor="start" textLength="39.5" lengthAdjust="spacingAndGlyphs">Trendanalyse</text>
<text x="86.7" y="25.4" font-size="7.8" font-weight="normal" fill="#111" text-anchor="start" textLength="20.3" lengthAdjust="spacingAndGlyphs">Galerie</text>
<text x="113.7" y="25.4" font-size="7.8" font-weight="normal" fill="#111" text-anchor="start" textLength="33.3" lengthAdjust="spacingAndGlyphs">Candlestick</text>
<text x="153.5" y="25.4" font-size="7.8" font-weight="normal" fill="#111" text-anchor="start" textLength="9.5" lengthAdjust="spacingAndGlyphs">Bar</text>
<text x="170.0" y="25.4" font-size="7.8" font-weight="normal" fill="#111" text-anchor="start" textLength="40.7" lengthAdjust="spacingAndGlyphs">Point &amp; Figure</text>
<text x="217.5" y="25.4" font-size="7.8" font-weight="normal" fill="#111" text-anchor="start" textLength="44.2" lengthAdjust="spacingAndGlyphs">Umsatzanalyse</text>
<text x="268.7" y="25.4" font-size="7.8" font-weight="normal" fill="#111" text-anchor="start" textLength="21.3" lengthAdjust="spacingAndGlyphs">Einfach</text>
<text x="5.5" y="37.0" font-size="9.3" font-weight="bold" fill="#fff" text-anchor="start" textLength="364.5" lengthAdjust="spacingAndGlyphs">ThyssenKrupp AG / Düsseldorf vom 03.09.2015 bis 08.09.2016 1 Jahr (Chart Standard)</text>
<text x="288.3" y="83.0" font-size="8.5" font-weight="bold" fill="#111" text-anchor="start" textLength="306.5" lengthAdjust="spacingAndGlyphs">ThyssenKrupp AG / Düsseldorf vom 03.09.2015 bis 08.09.2016 1 Jahr</text>
<line x1="82.5" y1="87" x2="82.5" y2="323" stroke="#d3d5d8" stroke-width="1" stroke-dasharray="1.8,2.6"/>
<line x1="82.5" y1="328" x2="82.5" y2="564" stroke="#d3d5d8" stroke-width="1" stroke-dasharray="1.8,2.6"/>
<line x1="287.6" y1="87" x2="287.6" y2="323" stroke="#d3d5d8" stroke-width="1" stroke-dasharray="1.8,2.6"/>
<line x1="287.6" y1="328" x2="287.6" y2="564" stroke="#d3d5d8" stroke-width="1" stroke-dasharray="1.8,2.6"/>
<line x1="489.1" y1="87" x2="489.1" y2="323" stroke="#d3d5d8" stroke-width="1" stroke-dasharray="1.8,2.6"/>
<line x1="489.1" y1="328" x2="489.1" y2="564" stroke="#d3d5d8" stroke-width="1" stroke-dasharray="1.8,2.6"/>
<line x1="690.8" y1="87" x2="690.8" y2="323" stroke="#d3d5d8" stroke-width="1" stroke-dasharray="1.8,2.6"/>
<line x1="690.8" y1="328" x2="690.8" y2="564" stroke="#d3d5d8" stroke-width="1" stroke-dasharray="1.8,2.6"/>
<line x1="19" y1="102.5" x2="856" y2="102.5" stroke="#d3d5d8" stroke-width="1" stroke-dasharray="1.8,2.6"/>
<line x1="19" y1="122.5" x2="856" y2="122.5" stroke="#d3d5d8" stroke-width="1" stroke-dasharray="1.8,2.6"/>
<line x1="19" y1="142.5" x2="856" y2="142.5" stroke="#d3d5d8" stroke-width="1" stroke-dasharray="1.8,2.6"/>
<line x1="19" y1="160.5" x2="856" y2="160.5" stroke="#d3d5d8" stroke-width="1" stroke-dasharray="1.8,2.6"/>
<line x1="19" y1="186" x2="856" y2="186" stroke="#d3d5d8" stroke-width="1" stroke-dasharray="1.8,2.6"/>
<line x1="19" y1="210.5" x2="856" y2="210.5" stroke="#d3d5d8" stroke-width="1" stroke-dasharray="1.8,2.6"/>
<line x1="19" y1="236" x2="856" y2="236" stroke="#d3d5d8" stroke-width="1" stroke-dasharray="1.8,2.6"/>
<line x1="19" y1="262.5" x2="856" y2="262.5" stroke="#d3d5d8" stroke-width="1" stroke-dasharray="1.8,2.6"/>
<line x1="19" y1="291.5" x2="856" y2="291.5" stroke="#d3d5d8" stroke-width="1" stroke-dasharray="1.8,2.6"/>
<line x1="19" y1="322.3" x2="856" y2="322.3" stroke="#d3d5d8" stroke-width="1" stroke-dasharray="1.8,2.6"/>
<line x1="19" y1="365.5" x2="856" y2="365.5" stroke="#8a8a8a" stroke-width="0.7" stroke-dasharray="1.7,1.9"/>
<line x1="19" y1="518.5" x2="856" y2="518.5" stroke="#8a8a8a" stroke-width="0.7" stroke-dasharray="1.7,1.9"/>
<path d="M53.3,104.3 L65.0,114.0 L76.7,123.2 L85.0,129.0 L93.3,133.5 L103.3,138.2 L115.0,146.5 L128.3,155.7 L138.3,160.7 L148.3,165.7 L158.3,171.0 L165.0,175.1 L170.2,178.4 L187.2,184.8 L200.7,184.8 L216.0,183.8 L227.9,184.0 L244.8,186.0 L260.1,185.7 L278.8,182.6 L289.0,180.6 L299.1,179.5 L304.2,180.4 L310.0,180.8 L320.0,183.0 L335.0,188.5 L350.1,195.0 L365.6,201.6 L389.9,217.1 L405.3,224.8 L420.7,232.9 L431.8,237.4 L440.6,240.0 L458.0,240.9 L480.9,241.4 L498.8,240.2 L511.5,236.3 L524.2,228.7 L536.9,219.3 L549.7,209.6 L562.4,202.0 L572.6,195.7 L584.3,188.7 L597.4,182.6 L612.4,174.7 L627.3,168.0 L640.4,163.9 L653.5,162.0 L668.4,160.2 L679.6,158.9 L690.8,158.3 L700.2,159.8 L713.2,159.8 L723.3,160.5 L735.0,163.0 L746.7,164.5 L756.7,164.5 L766.7,164.2 L776.7,161.7 L790.0,157.5 L805.0,152.5 L818.3,150.0 L828.3,148.7 L836.3,147.2" fill="none" stroke="#f24a4a" stroke-width="1" stroke-linejoin="round"/>
<path d="M20.9,160.5 L23.5,176.3 L29.4,172.1 L32.5,166.5 L35.7,172.0 L39.1,174.6 L41.8,186.0 L47.6,182.7 L51.0,189.4 L54.0,204.0 L56.9,205.2 L60.5,209.0 L61.9,220.0 L63.2,232.2 L66.3,242.1 L70.0,233.2 L73.1,253.3 L79.5,242.7 L82.6,246.1 L85.4,237.4 L88.5,213.6 L91.7,209.7 L94.4,185.3 L97.8,186.0 L103.6,179.2 L107.0,195.3 L110.0,191.6 L113.4,198.4 L116.5,200.6 L119.7,198.9 L123.1,199.2 L126.1,189.9 L129.0,178.0 L132.1,172.9 L135.1,174.6 L138.4,181.0 L141.4,174.3 L144.0,175.1 L147.4,181.7 L150.4,174.6 L153.8,174.3 L156.4,171.2 L159.6,178.3 L162.5,179.2 L165.9,165.6 L168.8,169.0 L172.4,154.9 L175.3,163.9 L178.7,177.5 L181.6,180.1 L184.9,165.1 L187.5,166.0 L190.9,151.6 L193.9,153.2 L197.3,156.3 L200.2,156.3 L202.9,152.6 L206.2,143.6 L209.2,146.1 L212.9,143.2 L216.0,143.6 L218.9,159.7 L221.9,167.3 L225.3,179.7 L228.2,176.2 L231.3,193.1 L234.2,196.7 L237.2,195.3 L240.6,198.7 L243.5,214.0 L246.5,203.0 L249.4,201.6 L252.8,193.6 L255.9,195.3 L258.9,188.5 L262.3,196.2 L265.5,169.0 L268.6,171.6 L272.0,174.1 L274.9,176.3 L277.9,175.8 L281.0,178.4 L284.4,184.6 L287.3,189.4 L290.3,194.0 L293.2,192.3 L296.3,203.0 L297.6,211.5 L300.5,222.6 L303.8,228.8 L308.2,232.1 L312.2,235.1 L315.5,244.0 L318.6,254.1 L321.5,256.8 L324.8,254.6 L327.6,271.1 L331.0,268.2 L334.0,262.9 L336.9,261.2 L339.8,253.9 L343.1,264.5 L346.2,266.0 L349.5,282.6 L352.4,283.9 L355.0,311.3 L358.3,304.9 L361.8,282.6 L364.9,291.0 L367.8,310.8 L371.1,320.7 L374.0,313.5 L377.3,319.0 L380.4,316.8 L383.2,287.7 L386.5,304.6 L389.9,267.8 L395.4,267.4 L398.7,250.6 L401.6,261.2 L404.9,274.0 L408.2,267.4 L411.5,265.6 L414.6,245.3 L417.9,232.1 L421.2,223.7 L430.0,209.5 L438.9,223.6 L442.2,206.3 L448.3,200.2 L451.6,203.2 L454.7,199.4 L458.0,199.4 L461.3,204.5 L464.4,205.8 L467.4,207.8 L470.2,214.7 L479.1,207.0 L482.7,178.3 L485.5,177.8 L489.1,162.0 L491.6,165.0 L494.9,180.3 L498.0,175.2 L501.3,183.6 L504.6,176.5 L508.2,159.9 L511.0,156.1 L514.0,134.5 L517.1,135.7 L520.4,133.2 L522.9,129.4 L526.0,117.4 L529.3,109.5 L532.6,116.6 L535.7,110.8 L538.7,117.9 L541.5,135.7 L544.6,137.0 L547.6,122.5 L551.0,128.1 L554.8,135.7 L557.3,155.4 L560.4,154.8 L563.7,156.1 L566.7,155.4 L570.0,177.8 L573.1,178.3 L576.3,163.3 L578.2,169.5 L581.9,170.8 L585.3,167.6 L588.1,166.3 L591.3,168.9 L594.6,183.1 L600.6,182.0 L604.0,172.9 L607.1,165.2 L610.1,146.7 L612.9,151.8 L616.1,151.8 L619.3,145.6 L622.3,151.4 L625.4,149.5 L628.6,143.7 L631.6,151.2 L634.8,140.2 L638.0,143.7 L640.9,154.6 L644.1,169.5 L647.3,191.0 L650.3,192.9 L653.8,196.2 L656.6,190.0 L660.0,175.1 L663.2,166.1 L666.2,163.9 L669.3,161.5 L672.1,143.9 L675.3,186.3 L678.3,211.5 L681.5,199.4 L684.7,187.6 L687.6,180.7 L690.8,160.2 L694.0,173.2 L697.0,208.7 L700.5,208.7 L703.9,202.8 L707.1,196.6 L709.5,160.2 L712.7,152.7 L715.7,151.5 L718.5,151.1 L722.0,148.0 L724.7,148.3 L728.0,155.3 L731.2,151.7 L734.2,151.3 L737.0,152.5 L740.0,144.7 L743.3,145.5 L746.7,141.3 L750.0,137.2 L753.0,133.7 L755.8,135.3 L759.2,148.7 L762.2,150.3 L765.0,140.0 L768.3,128.3 L771.2,119.2 L774.2,110.0 L777.5,118.7 L780.5,118.0 L783.8,111.2 L786.7,114.2 L789.7,111.3 L793.0,117.5 L796.2,116.2 L800.0,108.7 L802.8,112.0 L805.8,115.0 L808.8,120.8 L812.0,119.2 L815.0,116.2 L818.0,121.2 L821.2,120.5 L824.2,125.0 L827.5,118.3 L830.5,111.2 L833.7,105.8 L836.7,102.0" fill="none" stroke="#15158a" stroke-width="1.5" stroke-linejoin="round"/>
<path d="M20.5,504.0 L23.4,519.4 L29.3,510.2 L32.6,497.4 L36.0,504.6 L38.8,505.7 L41.9,519.4 L45.2,513.9 L48.1,510.6 L51.0,517.2 L54.3,533.3 L57.4,534.2 L60.2,537.1 L63.5,554.7 L66.4,560.9 L69.7,538.2 L73.0,550.3 L76.3,539.9 L79.4,528.9 L82.3,531.1 L85.2,515.0 L86.7,488.5 L88.5,467.1 L91.7,461.3 L94.6,423.6 L97.4,424.7 L103.7,414.8 L106.7,443.2 L109.9,436.3 L113.1,448.5 L116.4,452.6 L119.6,447.9 L123.0,449.4 L126.1,428.8 L128.9,410.7 L131.9,403.6 L135.1,407.4 L138.3,422.3 L141.3,410.5 L144.4,413.0 L147.6,428.3 L150.4,414.8 L153.4,414.3 L156.6,408.3 L159.8,427.0 L162.8,429.8 L166.3,401.4 L169.3,413.9 L172.5,386.4 L175.6,414.8 L178.6,439.1 L181.8,444.7 L185.0,418.0 L188.0,420.4 L191.2,397.1 L194.0,400.8 L197.3,408.3 L200.1,409.6 L203.3,403.6 L206.5,386.4 L209.5,395.2 L213.0,391.5 L216.0,390.2 L219.1,433.3 L222.2,451.1 L225.2,474.2 L228.3,464.5 L231.2,490.8 L234.5,494.9 L237.6,492.5 L240.7,497.3 L243.5,515.8 L246.6,488.9 L249.9,485.4 L253.0,468.7 L255.9,471.6 L259.0,454.9 L262.5,468.7 L265.6,420.0 L268.5,423.6 L275.1,433.1 L278.0,432.6 L281.1,437.1 L287.5,454.5 L290.3,463.3 L293.4,459.2 L296.5,475.9 L299.9,493.7 L302.9,502.5 L306.0,507.5 L311.3,512.0 L314.8,518.6 L318.4,531.2 L321.3,532.9 L324.3,527.7 L327.4,541.9 L330.8,533.6 L333.8,521.0 L336.9,516.3 L339.8,498.0 L343.4,511.5 L345.7,512.7 L349.3,530.1 L352.3,531.2 L355.2,551.8 L358.8,536.4 L361.6,491.3 L365.0,500.8 L368.3,517.4 L370.9,524.0 L374.2,510.3 L377.3,515.0 L380.4,510.7 L383.3,462.8 L386.3,480.1 L389.2,434.7 L395.6,434.4 L398.7,413.5 L404.7,445.5 L408.5,436.7 L411.8,435.1 L414.7,411.2 L417.5,396.7 L423.6,382.9 L430.0,373.0 L433.2,387.5 L439.2,404.3 L442.2,382.5 L448.0,375.7 L451.4,383.4 L454.9,378.0 L458.0,377.9 L461.0,392.5 L464.4,395.6 L467.9,402.0 L470.5,420.0 L479.9,404.6 L482.6,363.9 L485.6,362.9 L488.7,345.6 L492.1,357.8 L494.8,395.4 L497.9,388.2 L501.0,406.3 L504.8,396.8 L507.5,377.1 L511.0,371.6 L513.6,349.4 L517.0,353.6 L520.4,351.7 L523.6,347.9 L526.5,335.7 L529.2,330.0 L532.3,351.0 L535.6,344.9 L538.4,364.7 L541.7,407.9 L544.6,411.2 L547.5,390.8 L554.9,418.0 L557.4,450.3 L560.5,449.4 L563.7,452.2 L566.7,450.2 L569.9,481.0 L573.1,482.1 L575.9,454.8 L578.9,464.2 L582.0,466.0 L588.2,456.3 L591.4,460.6 L594.2,481.9 L597.4,480.0 L600.3,480.0 L603.9,459.1 L607.3,444.2 L610.1,412.0 L613.2,423.6 L616.2,422.7 L619.8,412.0 L622.8,424.6 L625.9,421.8 L628.7,410.5 L631.9,428.3 L634.7,409.2 L638.1,418.4 L641.3,440.4 L644.2,468.5 L647.0,495.2 L654.0,499.3 L657.1,487.1 L660.1,461.0 L662.9,442.7 L669.3,434.3 L672.1,404.9 L675.1,472.2 L678.2,492.4 L683.9,461.0 L687.6,452.8 L690.3,427.3 L693.7,442.8 L696.6,477.0 L699.9,477.0 L703.6,468.8 L706.5,461.5 L709.4,420.7 L712.7,413.6 L715.8,412.5 L718.6,412.3 L721.9,409.0 L724.8,409.0 L727.9,422.3 L731.4,417.4 L734.1,416.7 L737.0,418.5 L740.0,406.4 L743.4,409.7 L752.8,389.4 L756.2,394.9 L759.0,428.4 L762.3,432.2 L768.3,394.0 L774.5,367.2 L777.5,391.0 L780.2,389.5 L783.4,379.9 L787.1,389.3 L789.9,383.6 L793.1,402.9 L796.4,399.5 L799.6,387.0 L805.8,406.1 L809.0,422.5 L814.8,411.3 L817.9,426.3 L820.7,424.8 L824.1,438.2 L830.1,404.6 L836.6,385.0" fill="none" stroke="#15158a" stroke-width="1.3" stroke-linejoin="round"/>
<line x1="18" y1="85.7" x2="857.4" y2="85.7" stroke="#4a4a4a" stroke-width="1.3"/>
<line x1="18.5" y1="85.1" x2="18.5" y2="324" stroke="#333" stroke-width="1.05"/>
<line x1="856.8" y1="85.1" x2="856.8" y2="324" stroke="#333" stroke-width="1.05"/>
<line x1="18.2" y1="160" x2="18.2" y2="228" stroke="#000" stroke-width="1.6"/>
<line x1="857" y1="181" x2="857" y2="228" stroke="#000" stroke-width="1.6"/>
<rect x="2" y="324" width="16" height="2.4" fill="#fff"/>
<rect x="857.6" y="324" width="25.6" height="2.4" fill="#fff"/>
<line x1="18" y1="324.3" x2="857.5" y2="324.3" stroke="#444" stroke-width="1"/>
<line x1="18" y1="326.1" x2="857.5" y2="326.1" stroke="#8a8a8a" stroke-width="1.4"/>
<line x1="18.5" y1="326" x2="18.5" y2="565" stroke="#333" stroke-width="1.05"/>
<line x1="856.8" y1="326" x2="856.8" y2="565" stroke="#333" stroke-width="1.05"/>
<line x1="17.9" y1="564.4" x2="857.4" y2="564.4" stroke="#333" stroke-width="1.05"/>
<line x1="18.2" y1="432" x2="18.2" y2="470" stroke="#000" stroke-width="1.6"/>
<line x1="353" y1="564.2" x2="520" y2="564.2" stroke="#000" stroke-width="1.6"/>
<line x1="857" y1="430" x2="857" y2="467" stroke="#000" stroke-width="1.6"/>
<line x1="15.8" y1="102.5" x2="18" y2="102.5" stroke="#333" stroke-width="0.9"/>
<text x="6.7" y="105.2" font-size="7.5" font-weight="normal" fill="#0a0a0a" text-anchor="start" textLength="6.7" lengthAdjust="spacingAndGlyphs">22</text>
<line x1="15.8" y1="122.5" x2="18" y2="122.5" stroke="#333" stroke-width="0.9"/>
<text x="6.7" y="125.2" font-size="7.5" font-weight="normal" fill="#0a0a0a" text-anchor="start" textLength="6.7" lengthAdjust="spacingAndGlyphs">21</text>
<line x1="15.8" y1="142.5" x2="18" y2="142.5" stroke="#333" stroke-width="0.9"/>
<text x="6.7" y="145.2" font-size="7.5" font-weight="normal" fill="#0a0a0a" text-anchor="start" textLength="6.7" lengthAdjust="spacingAndGlyphs">20</text>
<line x1="15.8" y1="160.5" x2="18" y2="160.5" stroke="#333" stroke-width="0.9"/>
<text x="1.9" y="163.2" font-size="7.5" font-weight="normal" fill="#0a0a0a" text-anchor="start" textLength="11.5" lengthAdjust="spacingAndGlyphs">19,2</text>
<line x1="15.8" y1="186" x2="18" y2="186" stroke="#333" stroke-width="0.9"/>
<text x="6.7" y="188.7" font-size="7.5" font-weight="normal" fill="#0a0a0a" text-anchor="start" textLength="6.7" lengthAdjust="spacingAndGlyphs">18</text>
<line x1="15.8" y1="210.5" x2="18" y2="210.5" stroke="#333" stroke-width="0.9"/>
<text x="6.7" y="213.2" font-size="7.5" font-weight="normal" fill="#0a0a0a" text-anchor="start" textLength="6.7" lengthAdjust="spacingAndGlyphs">17</text>
<line x1="15.8" y1="236" x2="18" y2="236" stroke="#333" stroke-width="0.9"/>
<text x="6.7" y="238.7" font-size="7.5" font-weight="normal" fill="#0a0a0a" text-anchor="start" textLength="6.7" lengthAdjust="spacingAndGlyphs">16</text>
<line x1="15.8" y1="262.5" x2="18" y2="262.5" stroke="#333" stroke-width="0.9"/>
<text x="6.7" y="265.2" font-size="7.5" font-weight="normal" fill="#0a0a0a" text-anchor="start" textLength="6.7" lengthAdjust="spacingAndGlyphs">15</text>
<line x1="15.8" y1="291.5" x2="18" y2="291.5" stroke="#333" stroke-width="0.9"/>
<text x="6.7" y="294.2" font-size="7.5" font-weight="normal" fill="#0a0a0a" text-anchor="start" textLength="6.7" lengthAdjust="spacingAndGlyphs">14</text>
<line x1="16.8" y1="322.5" x2="18" y2="322.5" stroke="#333" stroke-width="0.8"/>
<line x1="857" y1="322.5" x2="858.5" y2="322.5" stroke="#333" stroke-width="0.8"/>
<line x1="16.8" y1="316.1" x2="18" y2="316.1" stroke="#333" stroke-width="0.8"/>
<line x1="857" y1="316.1" x2="858.5" y2="316.1" stroke="#333" stroke-width="0.8"/>
<line x1="16.8" y1="309.8" x2="18" y2="309.8" stroke="#333" stroke-width="0.8"/>
<line x1="857" y1="309.8" x2="858.5" y2="309.8" stroke="#333" stroke-width="0.8"/>
<line x1="16.8" y1="303.6" x2="18" y2="303.6" stroke="#333" stroke-width="0.8"/>
<line x1="857" y1="303.6" x2="858.5" y2="303.6" stroke="#333" stroke-width="0.8"/>
<line x1="16.8" y1="297.5" x2="18" y2="297.5" stroke="#333" stroke-width="0.8"/>
<line x1="857" y1="297.5" x2="858.5" y2="297.5" stroke="#333" stroke-width="0.8"/>
<line x1="16.8" y1="291.5" x2="18" y2="291.5" stroke="#333" stroke-width="0.8"/>
<line x1="857" y1="291.5" x2="858.5" y2="291.5" stroke="#333" stroke-width="0.8"/>
<line x1="16.8" y1="285.6" x2="18" y2="285.6" stroke="#333" stroke-width="0.8"/>
<line x1="857" y1="285.6" x2="858.5" y2="285.6" stroke="#333" stroke-width="0.8"/>
<line x1="16.8" y1="279.7" x2="18" y2="279.7" stroke="#333" stroke-width="0.8"/>
<line x1="857" y1="279.7" x2="858.5" y2="279.7" stroke="#333" stroke-width="0.8"/>
<line x1="16.8" y1="274.0" x2="18" y2="274.0" stroke="#333" stroke-width="0.8"/>
<line x1="857" y1="274.0" x2="858.5" y2="274.0" stroke="#333" stroke-width="0.8"/>
<line x1="16.8" y1="268.3" x2="18" y2="268.3" stroke="#333" stroke-width="0.8"/>
<line x1="857" y1="268.3" x2="858.5" y2="268.3" stroke="#333" stroke-width="0.8"/>
<line x1="16.8" y1="262.7" x2="18" y2="262.7" stroke="#333" stroke-width="0.8"/>
<line x1="857" y1="262.7" x2="858.5" y2="262.7" stroke="#333" stroke-width="0.8"/>
<line x1="16.8" y1="257.1" x2="18" y2="257.1" stroke="#333" stroke-width="0.8"/>
<line x1="857" y1="257.1" x2="858.5" y2="257.1" stroke="#333" stroke-width="0.8"/>
<line x1="16.8" y1="251.7" x2="18" y2="251.7" stroke="#333" stroke-width="0.8"/>
<line x1="857" y1="251.7" x2="858.5" y2="251.7" stroke="#333" stroke-width="0.8"/>
<line x1="16.8" y1="246.3" x2="18" y2="246.3" stroke="#333" stroke-width="0.8"/>
<line x1="857" y1="246.3" x2="858.5" y2="246.3" stroke="#333" stroke-width="0.8"/>
<line x1="16.8" y1="240.9" x2="18" y2="240.9" stroke="#333" stroke-width="0.8"/>
<line x1="857" y1="240.9" x2="858.5" y2="240.9" stroke="#333" stroke-width="0.8"/>
<line x1="16.8" y1="235.7" x2="18" y2="235.7" stroke="#333" stroke-width="0.8"/>
<line x1="857" y1="235.7" x2="858.5" y2="235.7" stroke="#333" stroke-width="0.8"/>
<line x1="16.8" y1="230.5" x2="18" y2="230.5" stroke="#333" stroke-width="0.8"/>
<line x1="857" y1="230.5" x2="858.5" y2="230.5" stroke="#333" stroke-width="0.8"/>
<line x1="16.8" y1="225.4" x2="18" y2="225.4" stroke="#333" stroke-width="0.8"/>
<line x1="857" y1="225.4" x2="858.5" y2="225.4" stroke="#333" stroke-width="0.8"/>
<line x1="16.8" y1="220.3" x2="18" y2="220.3" stroke="#333" stroke-width="0.8"/>
<line x1="857" y1="220.3" x2="858.5" y2="220.3" stroke="#333" stroke-width="0.8"/>
<line x1="16.8" y1="215.3" x2="18" y2="215.3" stroke="#333" stroke-width="0.8"/>
<line x1="857" y1="215.3" x2="858.5" y2="215.3" stroke="#333" stroke-width="0.8"/>
<line x1="16.8" y1="210.3" x2="18" y2="210.3" stroke="#333" stroke-width="0.8"/>
<line x1="857" y1="210.3" x2="858.5" y2="210.3" stroke="#333" stroke-width="0.8"/>
<line x1="16.8" y1="205.4" x2="18" y2="205.4" stroke="#333" stroke-width="0.8"/>
<line x1="857" y1="205.4" x2="858.5" y2="205.4" stroke="#333" stroke-width="0.8"/>
<line x1="16.8" y1="200.6" x2="18" y2="200.6" stroke="#333" stroke-width="0.8"/>
<line x1="857" y1="200.6" x2="858.5" y2="200.6" stroke="#333" stroke-width="0.8"/>
<line x1="16.8" y1="195.8" x2="18" y2="195.8" stroke="#333" stroke-width="0.8"/>
<line x1="857" y1="195.8" x2="858.5" y2="195.8" stroke="#333" stroke-width="0.8"/>
<line x1="16.8" y1="191.1" x2="18" y2="191.1" stroke="#333" stroke-width="0.8"/>
<line x1="857" y1="191.1" x2="858.5" y2="191.1" stroke="#333" stroke-width="0.8"/>
<line x1="16.8" y1="186.4" x2="18" y2="186.4" stroke="#333" stroke-width="0.8"/>
<line x1="857" y1="186.4" x2="858.5" y2="186.4" stroke="#333" stroke-width="0.8"/>
<line x1="16.8" y1="181.8" x2="18" y2="181.8" stroke="#333" stroke-width="0.8"/>
<line x1="857" y1="181.8" x2="858.5" y2="181.8" stroke="#333" stroke-width="0.8"/>
<line x1="16.8" y1="177.2" x2="18" y2="177.2" stroke="#333" stroke-width="0.8"/>
<line x1="857" y1="177.2" x2="858.5" y2="177.2" stroke="#333" stroke-width="0.8"/>
<line x1="16.8" y1="172.7" x2="18" y2="172.7" stroke="#333" stroke-width="0.8"/>
<line x1="857" y1="172.7" x2="858.5" y2="172.7" stroke="#333" stroke-width="0.8"/>
<line x1="16.8" y1="168.3" x2="18" y2="168.3" stroke="#333" stroke-width="0.8"/>
<line x1="857" y1="168.3" x2="858.5" y2="168.3" stroke="#333" stroke-width="0.8"/>
<line x1="16.8" y1="163.8" x2="18" y2="163.8" stroke="#333" stroke-width="0.8"/>
<line x1="857" y1="163.8" x2="858.5" y2="163.8" stroke="#333" stroke-width="0.8"/>
<line x1="16.8" y1="159.5" x2="18" y2="159.5" stroke="#333" stroke-width="0.8"/>
<line x1="857" y1="159.5" x2="858.5" y2="159.5" stroke="#333" stroke-width="0.8"/>
<line x1="16.8" y1="155.1" x2="18" y2="155.1" stroke="#333" stroke-width="0.8"/>
<line x1="857" y1="155.1" x2="858.5" y2="155.1" stroke="#333" stroke-width="0.8"/>
<line x1="16.8" y1="150.8" x2="18" y2="150.8" stroke="#333" stroke-width="0.8"/>
<line x1="857" y1="150.8" x2="858.5" y2="150.8" stroke="#333" stroke-width="0.8"/>
<line x1="16.8" y1="146.6" x2="18" y2="146.6" stroke="#333" stroke-width="0.8"/>
<line x1="857" y1="146.6" x2="858.5" y2="146.6" stroke="#333" stroke-width="0.8"/>
<line x1="16.8" y1="142.4" x2="18" y2="142.4" stroke="#333" stroke-width="0.8"/>
<line x1="857" y1="142.4" x2="858.5" y2="142.4" stroke="#333" stroke-width="0.8"/>
<line x1="16.8" y1="138.2" x2="18" y2="138.2" stroke="#333" stroke-width="0.8"/>
<line x1="857" y1="138.2" x2="858.5" y2="138.2" stroke="#333" stroke-width="0.8"/>
<line x1="16.8" y1="134.1" x2="18" y2="134.1" stroke="#333" stroke-width="0.8"/>
<line x1="857" y1="134.1" x2="858.5" y2="134.1" stroke="#333" stroke-width="0.8"/>
<line x1="16.8" y1="130.0" x2="18" y2="130.0" stroke="#333" stroke-width="0.8"/>
<line x1="857" y1="130.0" x2="858.5" y2="130.0" stroke="#333" stroke-width="0.8"/>
<line x1="16.8" y1="126.0" x2="18" y2="126.0" stroke="#333" stroke-width="0.8"/>
<line x1="857" y1="126.0" x2="858.5" y2="126.0" stroke="#333" stroke-width="0.8"/>
<line x1="16.8" y1="122.0" x2="18" y2="122.0" stroke="#333" stroke-width="0.8"/>
<line x1="857" y1="122.0" x2="858.5" y2="122.0" stroke="#333" stroke-width="0.8"/>
<line x1="16.8" y1="118.0" x2="18" y2="118.0" stroke="#333" stroke-width="0.8"/>
<line x1="857" y1="118.0" x2="858.5" y2="118.0" stroke="#333" stroke-width="0.8"/>
<line x1="16.8" y1="114.1" x2="18" y2="114.1" stroke="#333" stroke-width="0.8"/>
<line x1="857" y1="114.1" x2="858.5" y2="114.1" stroke="#333" stroke-width="0.8"/>
<line x1="16.8" y1="110.2" x2="18" y2="110.2" stroke="#333" stroke-width="0.8"/>
<line x1="857" y1="110.2" x2="858.5" y2="110.2" stroke="#333" stroke-width="0.8"/>
<line x1="16.8" y1="106.4" x2="18" y2="106.4" stroke="#333" stroke-width="0.8"/>
<line x1="857" y1="106.4" x2="858.5" y2="106.4" stroke="#333" stroke-width="0.8"/>
<line x1="16.8" y1="102.5" x2="18" y2="102.5" stroke="#333" stroke-width="0.8"/>
<line x1="857" y1="102.5" x2="858.5" y2="102.5" stroke="#333" stroke-width="0.8"/>
<line x1="16.8" y1="98.8" x2="18" y2="98.8" stroke="#333" stroke-width="0.8"/>
<line x1="857" y1="98.8" x2="858.5" y2="98.8" stroke="#333" stroke-width="0.8"/>
<line x1="16.8" y1="95.0" x2="18" y2="95.0" stroke="#333" stroke-width="0.8"/>
<line x1="857" y1="95.0" x2="858.5" y2="95.0" stroke="#333" stroke-width="0.8"/>
<line x1="16.8" y1="91.3" x2="18" y2="91.3" stroke="#333" stroke-width="0.8"/>
<line x1="857" y1="91.3" x2="858.5" y2="91.3" stroke="#333" stroke-width="0.8"/>
<line x1="16.8" y1="87.6" x2="18" y2="87.6" stroke="#333" stroke-width="0.8"/>
<line x1="857" y1="87.6" x2="858.5" y2="87.6" stroke="#333" stroke-width="0.8"/>
<line x1="857" y1="102.5" x2="859.6" y2="102.5" stroke="#333" stroke-width="0.9"/>
<text x="861.8" y="105.2" font-size="7.5" font-weight="normal" fill="#0a0a0a" text-anchor="start" textLength="18.6" lengthAdjust="spacingAndGlyphs">14,9%</text>
<line x1="857" y1="122.5" x2="859.6" y2="122.5" stroke="#333" stroke-width="0.9"/>
<text x="861.8" y="125.2" font-size="7.5" font-weight="normal" fill="#0a0a0a" text-anchor="start" textLength="15.0" lengthAdjust="spacingAndGlyphs">9,6%</text>
<line x1="857" y1="142.5" x2="859.6" y2="142.5" stroke="#333" stroke-width="0.9"/>
<text x="861.8" y="145.2" font-size="7.5" font-weight="normal" fill="#0a0a0a" text-anchor="start" textLength="15.0" lengthAdjust="spacingAndGlyphs">4,4%</text>
<line x1="857" y1="160.5" x2="859.6" y2="160.5" stroke="#333" stroke-width="0.9"/>
<text x="861.8" y="163.2" font-size="7.5" font-weight="normal" fill="#0a0a0a" text-anchor="start" textLength="8.4" lengthAdjust="spacingAndGlyphs">0%</text>
<line x1="857" y1="186" x2="859.6" y2="186" stroke="#333" stroke-width="0.9"/>
<text x="861.8" y="188.7" font-size="7.5" font-weight="normal" fill="#0a0a0a" text-anchor="start" textLength="11.0" lengthAdjust="spacingAndGlyphs">-6%</text>
<line x1="857" y1="210.5" x2="859.6" y2="210.5" stroke="#333" stroke-width="0.9"/>
<text x="861.8" y="213.2" font-size="7.5" font-weight="normal" fill="#0a0a0a" text-anchor="start" textLength="21.0" lengthAdjust="spacingAndGlyphs">-11,3%</text>
<line x1="857" y1="236" x2="859.6" y2="236" stroke="#333" stroke-width="0.9"/>
<text x="861.8" y="238.7" font-size="7.5" font-weight="normal" fill="#0a0a0a" text-anchor="start" textLength="21.0" lengthAdjust="spacingAndGlyphs">-16,5%</text>
<line x1="857" y1="262.5" x2="859.6" y2="262.5" stroke="#333" stroke-width="0.9"/>
<text x="861.8" y="265.2" font-size="7.5" font-weight="normal" fill="#0a0a0a" text-anchor="start" textLength="21.0" lengthAdjust="spacingAndGlyphs">-21,7%</text>
<line x1="857" y1="291.5" x2="859.6" y2="291.5" stroke="#333" stroke-width="0.9"/>
<text x="861.8" y="294.2" font-size="7.5" font-weight="normal" fill="#0a0a0a" text-anchor="start" textLength="21.0" lengthAdjust="spacingAndGlyphs">-26,9%</text>
<line x1="15.8" y1="346.3" x2="18" y2="346.3" stroke="#333" stroke-width="0.9"/>
<line x1="857" y1="346.3" x2="859.6" y2="346.3" stroke="#333" stroke-width="0.9"/>
<text x="6.4" y="349.0" font-size="7.5" font-weight="normal" fill="#0a0a0a" text-anchor="start" textLength="7.0" lengthAdjust="spacingAndGlyphs">75</text>
<text x="861.8" y="349.0" font-size="7.5" font-weight="normal" fill="#0a0a0a" text-anchor="start" textLength="7.0" lengthAdjust="spacingAndGlyphs">75</text>
<line x1="15.8" y1="365.4" x2="18" y2="365.4" stroke="#333" stroke-width="0.9"/>
<line x1="857" y1="365.4" x2="859.6" y2="365.4" stroke="#333" stroke-width="0.9"/>
<text x="6.4" y="368.1" font-size="7.5" font-weight="normal" fill="#0a0a0a" text-anchor="start" textLength="7.0" lengthAdjust="spacingAndGlyphs">70</text>
<text x="861.8" y="368.1" font-size="7.5" font-weight="normal" fill="#0a0a0a" text-anchor="start" textLength="7.0" lengthAdjust="spacingAndGlyphs">70</text>
<line x1="15.8" y1="384.5" x2="18" y2="384.5" stroke="#333" stroke-width="0.9"/>
<line x1="857" y1="384.5" x2="859.6" y2="384.5" stroke="#333" stroke-width="0.9"/>
<text x="6.4" y="387.2" font-size="7.5" font-weight="normal" fill="#0a0a0a" text-anchor="start" textLength="7.0" lengthAdjust="spacingAndGlyphs">65</text>
<text x="861.8" y="387.2" font-size="7.5" font-weight="normal" fill="#0a0a0a" text-anchor="start" textLength="7.0" lengthAdjust="spacingAndGlyphs">65</text>
<line x1="15.8" y1="403.7" x2="18" y2="403.7" stroke="#333" stroke-width="0.9"/>
<line x1="857" y1="403.7" x2="859.6" y2="403.7" stroke="#333" stroke-width="0.9"/>
<text x="6.4" y="406.4" font-size="7.5" font-weight="normal" fill="#0a0a0a" text-anchor="start" textLength="7.0" lengthAdjust="spacingAndGlyphs">60</text>
<text x="861.8" y="406.4" font-size="7.5" font-weight="normal" fill="#0a0a0a" text-anchor="start" textLength="7.0" lengthAdjust="spacingAndGlyphs">60</text>
<line x1="15.8" y1="422.8" x2="18" y2="422.8" stroke="#333" stroke-width="0.9"/>
<line x1="857" y1="422.8" x2="859.6" y2="422.8" stroke="#333" stroke-width="0.9"/>
<text x="6.4" y="425.5" font-size="7.5" font-weight="normal" fill="#0a0a0a" text-anchor="start" textLength="7.0" lengthAdjust="spacingAndGlyphs">55</text>
<text x="861.8" y="425.5" font-size="7.5" font-weight="normal" fill="#0a0a0a" text-anchor="start" textLength="7.0" lengthAdjust="spacingAndGlyphs">55</text>
<line x1="15.8" y1="441.9" x2="18" y2="441.9" stroke="#333" stroke-width="0.9"/>
<line x1="857" y1="441.9" x2="859.6" y2="441.9" stroke="#333" stroke-width="0.9"/>
<text x="6.4" y="444.6" font-size="7.5" font-weight="normal" fill="#0a0a0a" text-anchor="start" textLength="7.0" lengthAdjust="spacingAndGlyphs">50</text>
<text x="861.8" y="444.6" font-size="7.5" font-weight="normal" fill="#0a0a0a" text-anchor="start" textLength="7.0" lengthAdjust="spacingAndGlyphs">50</text>
<line x1="15.8" y1="461.0" x2="18" y2="461.0" stroke="#333" stroke-width="0.9"/>
<line x1="857" y1="461.0" x2="859.6" y2="461.0" stroke="#333" stroke-width="0.9"/>
<text x="6.4" y="463.7" font-size="7.5" font-weight="normal" fill="#0a0a0a" text-anchor="start" textLength="7.0" lengthAdjust="spacingAndGlyphs">45</text>
<text x="861.8" y="463.7" font-size="7.5" font-weight="normal" fill="#0a0a0a" text-anchor="start" textLength="7.0" lengthAdjust="spacingAndGlyphs">45</text>
<line x1="15.8" y1="480.1" x2="18" y2="480.1" stroke="#333" stroke-width="0.9"/>
<line x1="857" y1="480.1" x2="859.6" y2="480.1" stroke="#333" stroke-width="0.9"/>
<text x="6.4" y="482.8" font-size="7.5" font-weight="normal" fill="#0a0a0a" text-anchor="start" textLength="7.0" lengthAdjust="spacingAndGlyphs">40</text>
<text x="861.8" y="482.8" font-size="7.5" font-weight="normal" fill="#0a0a0a" text-anchor="start" textLength="7.0" lengthAdjust="spacingAndGlyphs">40</text>
<line x1="15.8" y1="499.3" x2="18" y2="499.3" stroke="#333" stroke-width="0.9"/>
<line x1="857" y1="499.3" x2="859.6" y2="499.3" stroke="#333" stroke-width="0.9"/>
<text x="6.4" y="502.0" font-size="7.5" font-weight="normal" fill="#0a0a0a" text-anchor="start" textLength="7.0" lengthAdjust="spacingAndGlyphs">35</text>
<text x="861.8" y="502.0" font-size="7.5" font-weight="normal" fill="#0a0a0a" text-anchor="start" textLength="7.0" lengthAdjust="spacingAndGlyphs">35</text>
<line x1="15.8" y1="518.4" x2="18" y2="518.4" stroke="#333" stroke-width="0.9"/>
<line x1="857" y1="518.4" x2="859.6" y2="518.4" stroke="#333" stroke-width="0.9"/>
<text x="6.4" y="521.1" font-size="7.5" font-weight="normal" fill="#0a0a0a" text-anchor="start" textLength="7.0" lengthAdjust="spacingAndGlyphs">30</text>
<text x="861.8" y="521.1" font-size="7.5" font-weight="normal" fill="#0a0a0a" text-anchor="start" textLength="7.0" lengthAdjust="spacingAndGlyphs">30</text>
<line x1="15.8" y1="537.5" x2="18" y2="537.5" stroke="#333" stroke-width="0.9"/>
<line x1="857" y1="537.5" x2="859.6" y2="537.5" stroke="#333" stroke-width="0.9"/>
<text x="6.4" y="540.2" font-size="7.5" font-weight="normal" fill="#0a0a0a" text-anchor="start" textLength="7.0" lengthAdjust="spacingAndGlyphs">25</text>
<text x="861.8" y="540.2" font-size="7.5" font-weight="normal" fill="#0a0a0a" text-anchor="start" textLength="7.0" lengthAdjust="spacingAndGlyphs">25</text>
<line x1="15.8" y1="556.6" x2="18" y2="556.6" stroke="#333" stroke-width="0.9"/>
<line x1="857" y1="556.6" x2="859.6" y2="556.6" stroke="#333" stroke-width="0.9"/>
<text x="6.4" y="559.3" font-size="7.5" font-weight="normal" fill="#0a0a0a" text-anchor="start" textLength="7.0" lengthAdjust="spacingAndGlyphs">20</text>
<text x="861.8" y="559.3" font-size="7.5" font-weight="normal" fill="#0a0a0a" text-anchor="start" textLength="7.0" lengthAdjust="spacingAndGlyphs">20</text>
<line x1="16.7" y1="331.0" x2="18" y2="331.0" stroke="#333" stroke-width="0.8"/>
<line x1="857" y1="331.0" x2="858.6" y2="331.0" stroke="#333" stroke-width="0.8"/>
<line x1="16.7" y1="334.8" x2="18" y2="334.8" stroke="#333" stroke-width="0.8"/>
<line x1="857" y1="334.8" x2="858.6" y2="334.8" stroke="#333" stroke-width="0.8"/>
<line x1="16.7" y1="338.6" x2="18" y2="338.6" stroke="#333" stroke-width="0.8"/>
<line x1="857" y1="338.6" x2="858.6" y2="338.6" stroke="#333" stroke-width="0.8"/>
<line x1="16.7" y1="342.5" x2="18" y2="342.5" stroke="#333" stroke-width="0.8"/>
<line x1="857" y1="342.5" x2="858.6" y2="342.5" stroke="#333" stroke-width="0.8"/>
<line x1="16.7" y1="346.3" x2="18" y2="346.3" stroke="#333" stroke-width="0.8"/>
<line x1="857" y1="346.3" x2="858.6" y2="346.3" stroke="#333" stroke-width="0.8"/>
<line x1="16.7" y1="350.1" x2="18" y2="350.1" stroke="#333" stroke-width="0.8"/>
<line x1="857" y1="350.1" x2="858.6" y2="350.1" stroke="#333" stroke-width="0.8"/>
<line x1="16.7" y1="353.9" x2="18" y2="353.9" stroke="#333" stroke-width="0.8"/>
<line x1="857" y1="353.9" x2="858.6" y2="353.9" stroke="#333" stroke-width="0.8"/>
<line x1="16.7" y1="357.8" x2="18" y2="357.8" stroke="#333" stroke-width="0.8"/>
<line x1="857" y1="357.8" x2="858.6" y2="357.8" stroke="#333" stroke-width="0.8"/>
<line x1="16.7" y1="361.6" x2="18" y2="361.6" stroke="#333" stroke-width="0.8"/>
<line x1="857" y1="361.6" x2="858.6" y2="361.6" stroke="#333" stroke-width="0.8"/>
<line x1="16.7" y1="365.4" x2="18" y2="365.4" stroke="#333" stroke-width="0.8"/>
<line x1="857" y1="365.4" x2="858.6" y2="365.4" stroke="#333" stroke-width="0.8"/>
<line x1="16.7" y1="369.2" x2="18" y2="369.2" stroke="#333" stroke-width="0.8"/>
<line x1="857" y1="369.2" x2="858.6" y2="369.2" stroke="#333" stroke-width="0.8"/>
<line x1="16.7" y1="373.1" x2="18" y2="373.1" stroke="#333" stroke-width="0.8"/>
<line x1="857" y1="373.1" x2="858.6" y2="373.1" stroke="#333" stroke-width="0.8"/>
<line x1="16.7" y1="376.9" x2="18" y2="376.9" stroke="#333" stroke-width="0.8"/>
<line x1="857" y1="376.9" x2="858.6" y2="376.9" stroke="#333" stroke-width="0.8"/>
<line x1="16.7" y1="380.7" x2="18" y2="380.7" stroke="#333" stroke-width="0.8"/>
<line x1="857" y1="380.7" x2="858.6" y2="380.7" stroke="#333" stroke-width="0.8"/>
<line x1="16.7" y1="384.5" x2="18" y2="384.5" stroke="#333" stroke-width="0.8"/>
<line x1="857" y1="384.5" x2="858.6" y2="384.5" stroke="#333" stroke-width="0.8"/>
<line x1="16.7" y1="388.4" x2="18" y2="388.4" stroke="#333" stroke-width="0.8"/>
<line x1="857" y1="388.4" x2="858.6" y2="388.4" stroke="#333" stroke-width="0.8"/>
<line x1="16.7" y1="392.2" x2="18" y2="392.2" stroke="#333" stroke-width="0.8"/>
<line x1="857" y1="392.2" x2="858.6" y2="392.2" stroke="#333" stroke-width="0.8"/>
<line x1="16.7" y1="396.0" x2="18" y2="396.0" stroke="#333" stroke-width="0.8"/>
<line x1="857" y1="396.0" x2="858.6" y2="396.0" stroke="#333" stroke-width="0.8"/>
<line x1="16.7" y1="399.8" x2="18" y2="399.8" stroke="#333" stroke-width="0.8"/>
<line x1="857" y1="399.8" x2="858.6" y2="399.8" stroke="#333" stroke-width="0.8"/>
<line x1="16.7" y1="403.7" x2="18" y2="403.7" stroke="#333" stroke-width="0.8"/>
<line x1="857" y1="403.7" x2="858.6" y2="403.7" stroke="#333" stroke-width="0.8"/>
<line x1="16.7" y1="407.5" x2="18" y2="407.5" stroke="#333" stroke-width="0.8"/>
<line x1="857" y1="407.5" x2="858.6" y2="407.5" stroke="#333" stroke-width="0.8"/>
<line x1="16.7" y1="411.3" x2="18" y2="411.3" stroke="#333" stroke-width="0.8"/>
<line x1="857" y1="411.3" x2="858.6" y2="411.3" stroke="#333" stroke-width="0.8"/>
<line x1="16.7" y1="415.1" x2="18" y2="415.1" stroke="#333" stroke-width="0.8"/>
<line x1="857" y1="415.1" x2="858.6" y2="415.1" stroke="#333" stroke-width="0.8"/>
<line x1="16.7" y1="419.0" x2="18" y2="419.0" stroke="#333" stroke-width="0.8"/>
<line x1="857" y1="419.0" x2="858.6" y2="419.0" stroke="#333" stroke-width="0.8"/>
<line x1="16.7" y1="422.8" x2="18" y2="422.8" stroke="#333" stroke-width="0.8"/>
<line x1="857" y1="422.8" x2="858.6" y2="422.8" stroke="#333" stroke-width="0.8"/>
<line x1="16.7" y1="426.6" x2="18" y2="426.6" stroke="#333" stroke-width="0.8"/>
<line x1="857" y1="426.6" x2="858.6" y2="426.6" stroke="#333" stroke-width="0.8"/>
<line x1="16.7" y1="430.4" x2="18" y2="430.4" stroke="#333" stroke-width="0.8"/>
<line x1="857" y1="430.4" x2="858.6" y2="430.4" stroke="#333" stroke-width="0.8"/>
<line x1="16.7" y1="434.2" x2="18" y2="434.2" stroke="#333" stroke-width="0.8"/>
<line x1="857" y1="434.2" x2="858.6" y2="434.2" stroke="#333" stroke-width="0.8"/>
<line x1="16.7" y1="438.1" x2="18" y2="438.1" stroke="#333" stroke-width="0.8"/>
<line x1="857" y1="438.1" x2="858.6" y2="438.1" stroke="#333" stroke-width="0.8"/>
<line x1="16.7" y1="441.9" x2="18" y2="441.9" stroke="#333" stroke-width="0.8"/>
<line x1="857" y1="441.9" x2="858.6" y2="441.9" stroke="#333" stroke-width="0.8"/>
<line x1="16.7" y1="445.7" x2="18" y2="445.7" stroke="#333" stroke-width="0.8"/>
<line x1="857" y1="445.7" x2="858.6" y2="445.7" stroke="#333" stroke-width="0.8"/>
<line x1="16.7" y1="449.5" x2="18" y2="449.5" stroke="#333" stroke-width="0.8"/>
<line x1="857" y1="449.5" x2="858.6" y2="449.5" stroke="#333" stroke-width="0.8"/>
<line x1="16.7" y1="453.4" x2="18" y2="453.4" stroke="#333" stroke-width="0.8"/>
<line x1="857" y1="453.4" x2="858.6" y2="453.4" stroke="#333" stroke-width="0.8"/>
<line x1="16.7" y1="457.2" x2="18" y2="457.2" stroke="#333" stroke-width="0.8"/>
<line x1="857" y1="457.2" x2="858.6" y2="457.2" stroke="#333" stroke-width="0.8"/>
<line x1="16.7" y1="461.0" x2="18" y2="461.0" stroke="#333" stroke-width="0.8"/>
<line x1="857" y1="461.0" x2="858.6" y2="461.0" stroke="#333" stroke-width="0.8"/>
<line x1="16.7" y1="464.8" x2="18" y2="464.8" stroke="#333" stroke-width="0.8"/>
<line x1="857" y1="464.8" x2="858.6" y2="464.8" stroke="#333" stroke-width="0.8"/>
<line x1="16.7" y1="468.7" x2="18" y2="468.7" stroke="#333" stroke-width="0.8"/>
<line x1="857" y1="468.7" x2="858.6" y2="468.7" stroke="#333" stroke-width="0.8"/>
<line x1="16.7" y1="472.5" x2="18" y2="472.5" stroke="#333" stroke-width="0.8"/>
<line x1="857" y1="472.5" x2="858.6" y2="472.5" stroke="#333" stroke-width="0.8"/>
<line x1="16.7" y1="476.3" x2="18" y2="476.3" stroke="#333" stroke-width="0.8"/>
<line x1="857" y1="476.3" x2="858.6" y2="476.3" stroke="#333" stroke-width="0.8"/>
<line x1="16.7" y1="480.1" x2="18" y2="480.1" stroke="#333" stroke-width="0.8"/>
<line x1="857" y1="480.1" x2="858.6" y2="480.1" stroke="#333" stroke-width="0.8"/>
<line x1="16.7" y1="484.0" x2="18" y2="484.0" stroke="#333" stroke-width="0.8"/>
<line x1="857" y1="484.0" x2="858.6" y2="484.0" stroke="#333" stroke-width="0.8"/>
<line x1="16.7" y1="487.8" x2="18" y2="487.8" stroke="#333" stroke-width="0.8"/>
<line x1="857" y1="487.8" x2="858.6" y2="487.8" stroke="#333" stroke-width="0.8"/>
<line x1="16.7" y1="491.6" x2="18" y2="491.6" stroke="#333" stroke-width="0.8"/>
<line x1="857" y1="491.6" x2="858.6" y2="491.6" stroke="#333" stroke-width="0.8"/>
<line x1="16.7" y1="495.4" x2="18" y2="495.4" stroke="#333" stroke-width="0.8"/>
<line x1="857" y1="495.4" x2="858.6" y2="495.4" stroke="#333" stroke-width="0.8"/>
<line x1="16.7" y1="499.3" x2="18" y2="499.3" stroke="#333" stroke-width="0.8"/>
<line x1="857" y1="499.3" x2="858.6" y2="499.3" stroke="#333" stroke-width="0.8"/>
<line x1="16.7" y1="503.1" x2="18" y2="503.1" stroke="#333" stroke-width="0.8"/>
<line x1="857" y1="503.1" x2="858.6" y2="503.1" stroke="#333" stroke-width="0.8"/>
<line x1="16.7" y1="506.9" x2="18" y2="506.9" stroke="#333" stroke-width="0.8"/>
<line x1="857" y1="506.9" x2="858.6" y2="506.9" stroke="#333" stroke-width="0.8"/>
<line x1="16.7" y1="510.7" x2="18" y2="510.7" stroke="#333" stroke-width="0.8"/>
<line x1="857" y1="510.7" x2="858.6" y2="510.7" stroke="#333" stroke-width="0.8"/>
<line x1="16.7" y1="514.6" x2="18" y2="514.6" stroke="#333" stroke-width="0.8"/>
<line x1="857" y1="514.6" x2="858.6" y2="514.6" stroke="#333" stroke-width="0.8"/>
<line x1="16.7" y1="518.4" x2="18" y2="518.4" stroke="#333" stroke-width="0.8"/>
<line x1="857" y1="518.4" x2="858.6" y2="518.4" stroke="#333" stroke-width="0.8"/>
<line x1="16.7" y1="522.2" x2="18" y2="522.2" stroke="#333" stroke-width="0.8"/>
<line x1="857" y1="522.2" x2="858.6" y2="522.2" stroke="#333" stroke-width="0.8"/>
<line x1="16.7" y1="526.0" x2="18" y2="526.0" stroke="#333" stroke-width="0.8"/>
<line x1="857" y1="526.0" x2="858.6" y2="526.0" stroke="#333" stroke-width="0.8"/>
<line x1="16.7" y1="529.8" x2="18" y2="529.8" stroke="#333" stroke-width="0.8"/>
<line x1="857" y1="529.8" x2="858.6" y2="529.8" stroke="#333" stroke-width="0.8"/>
<line x1="16.7" y1="533.7" x2="18" y2="533.7" stroke="#333" stroke-width="0.8"/>
<line x1="857" y1="533.7" x2="858.6" y2="533.7" stroke="#333" stroke-width="0.8"/>
<line x1="16.7" y1="537.5" x2="18" y2="537.5" stroke="#333" stroke-width="0.8"/>
<line x1="857" y1="537.5" x2="858.6" y2="537.5" stroke="#333" stroke-width="0.8"/>
<line x1="16.7" y1="541.3" x2="18" y2="541.3" stroke="#333" stroke-width="0.8"/>
<line x1="857" y1="541.3" x2="858.6" y2="541.3" stroke="#333" stroke-width="0.8"/>
<line x1="16.7" y1="545.1" x2="18" y2="545.1" stroke="#333" stroke-width="0.8"/>
<line x1="857" y1="545.1" x2="858.6" y2="545.1" stroke="#333" stroke-width="0.8"/>
<line x1="16.7" y1="549.0" x2="18" y2="549.0" stroke="#333" stroke-width="0.8"/>
<line x1="857" y1="549.0" x2="858.6" y2="549.0" stroke="#333" stroke-width="0.8"/>
<line x1="16.7" y1="552.8" x2="18" y2="552.8" stroke="#333" stroke-width="0.8"/>
<line x1="857" y1="552.8" x2="858.6" y2="552.8" stroke="#333" stroke-width="0.8"/>
<line x1="16.7" y1="556.6" x2="18" y2="556.6" stroke="#333" stroke-width="0.8"/>
<line x1="857" y1="556.6" x2="858.6" y2="556.6" stroke="#333" stroke-width="0.8"/>
<line x1="16.7" y1="560.4" x2="18" y2="560.4" stroke="#333" stroke-width="0.8"/>
<line x1="857" y1="560.4" x2="858.6" y2="560.4" stroke="#333" stroke-width="0.8"/>
<line x1="82.5" y1="564" x2="82.5" y2="567.5" stroke="#222" stroke-width="1"/>
<text x="82.0" y="574.4" font-size="7.5" font-weight="normal" fill="#0a0a0a" text-anchor="start" textLength="19.3" lengthAdjust="spacingAndGlyphs">Okt 15</text>
<line x1="287.6" y1="564" x2="287.6" y2="567.5" stroke="#222" stroke-width="1"/>
<text x="287.1" y="574.4" font-size="7.5" font-weight="normal" fill="#0a0a0a" text-anchor="start" textLength="19.3" lengthAdjust="spacingAndGlyphs">Jan 16</text>
<line x1="489.1" y1="564" x2="489.1" y2="567.5" stroke="#222" stroke-width="1"/>
<text x="488.6" y="574.4" font-size="7.5" font-weight="normal" fill="#0a0a0a" text-anchor="start" textLength="19.3" lengthAdjust="spacingAndGlyphs">Apr 16</text>
<line x1="690.8" y1="564" x2="690.8" y2="567.5" stroke="#222" stroke-width="1"/>
<text x="690.3" y="574.4" font-size="7.5" font-weight="normal" fill="#0a0a0a" text-anchor="start" textLength="19.3" lengthAdjust="spacingAndGlyphs">Jul 16</text>
<line x1="150.5" y1="564" x2="150.5" y2="566.5" stroke="#222" stroke-width="1"/>
<line x1="219" y1="564" x2="219" y2="566.5" stroke="#222" stroke-width="1"/>
<line x1="354.5" y1="564" x2="354.5" y2="566.5" stroke="#222" stroke-width="1"/>
<line x1="421.4" y1="564" x2="421.4" y2="566.5" stroke="#222" stroke-width="1"/>
<line x1="556.4" y1="564" x2="556.4" y2="566.5" stroke="#222" stroke-width="1"/>
<line x1="623.6" y1="564" x2="623.6" y2="566.5" stroke="#222" stroke-width="1"/>
<line x1="757.8" y1="564" x2="757.8" y2="566.5" stroke="#222" stroke-width="1"/>
<line x1="824.4" y1="564" x2="824.4" y2="566.5" stroke="#222" stroke-width="1"/>
<text x="2.0" y="585.8" font-size="7.8" font-weight="normal" fill="#111" text-anchor="start" textLength="43.0" lengthAdjust="spacingAndGlyphs">Cursorposition:</text>
<text x="51.0" y="585.8" font-size="7.8" font-weight="normal" fill="#111" text-anchor="start" textLength="9.3" lengthAdjust="spacingAndGlyphs">n/a</text>
<text x="99.7" y="585.8" font-size="7.8" font-weight="normal" fill="#111" text-anchor="start" textLength="9.3" lengthAdjust="spacingAndGlyphs">n/a</text>
<text x="173.3" y="585.8" font-size="7.8" font-weight="normal" fill="#111" text-anchor="start" textLength="9.3" lengthAdjust="spacingAndGlyphs">n/a</text>
<rect x="20" y="86.4" width="134.3" height="17.9" fill="#fff" stroke="#6e6e6e" stroke-width="1.2"/>
<line x1="22.8" y1="91.2" x2="30.7" y2="91.2" stroke="#15158a" stroke-width="1.5"/>
<line x1="22.8" y1="99.5" x2="30.2" y2="99.5" stroke="#f24a4a" stroke-width="1.1"/>
<text x="33" y="94.2" font-size="7.8" fill="#2a2aa0" textLength="98.5" lengthAdjust="spacingAndGlyphs">Close (*) 22,04 EUR (06.09)</text>
<text x="33" y="102.3" font-size="7.8" fill="#2a2aa0" textLength="119.5" lengthAdjust="spacingAndGlyphs">GD65 von Close 19,76508 (06.09)</text>
<rect x="11.8" y="85.6" width="5.6" height="8.6" fill="#fff" stroke="#666" stroke-width="1"/>
<text x="14.6" y="92.4" font-size="7" font-weight="bold" text-anchor="middle" fill="#111">a</text>
<rect x="858" y="85.7" width="7.6" height="8.6" fill="#fff" stroke="#444" stroke-width="1"/>
<text x="861.8" y="92.6" font-size="6.5" font-weight="bold" text-anchor="middle" fill="#111">%</text>
<rect x="19.7" y="326.6" width="149" height="10.4" fill="#fff" stroke="#777" stroke-width="1.2"/>
<line x1="22.5" y1="331.8" x2="30.5" y2="331.8" stroke="#15158a" stroke-width="1.6"/>
<text x="32.4" y="334.6" font-size="7.8" fill="#2a2aa0" textLength="134.6" lengthAdjust="spacingAndGlyphs">RSI14 von Close (*) 64,80904 (06.09)</text>
<rect x="13.2" y="326" width="4.2" height="9.6" fill="#fff" stroke="#666" stroke-width="1"/>
<text x="15.3" y="333.5" font-size="7" font-weight="bold" text-anchor="middle" fill="#111">f</text>
<rect x="858.2" y="326" width="5.2" height="9" fill="#fff" stroke="#666" stroke-width="1"/>
<rect x="860" y="330.2" width="2" height="1.6" fill="#222"/>
</svg>
</body></html>
